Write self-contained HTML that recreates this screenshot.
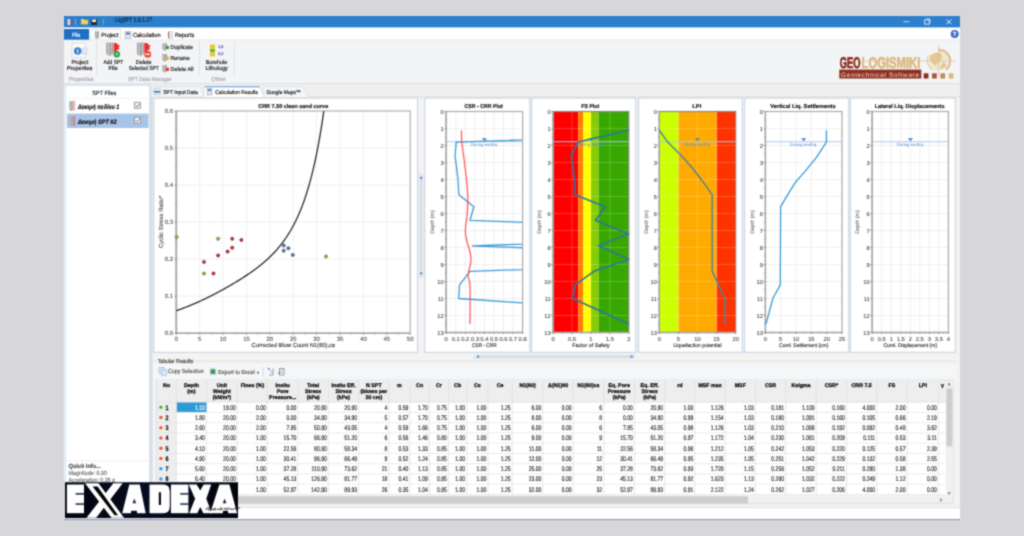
<!DOCTYPE html>
<html><head><meta charset="utf-8"><title>LiqSPT</title>
<style>html,body{margin:0;padding:0;width:1024px;height:536px;overflow:hidden;background:#d7d7d9}
svg{display:block} text{font-family:"Liberation Sans",sans-serif;text-rendering:geometricPrecision}</style></head>
<body><svg width="1024" height="536" viewBox="0 0 1024 536">
<defs><filter id="soft" x="0" y="0" width="1024" height="536" filterUnits="userSpaceOnUse" color-interpolation-filters="sRGB"><feConvolveMatrix order="3" kernelMatrix="1 2 1 2 8 2 1 2 1" divisor="20" edgeMode="duplicate"/></filter></defs>
<g filter="url(#soft)">
<rect x="0" y="0" width="1024" height="536" fill="#d7d7d9" />
<rect x="64" y="16" width="896" height="504" fill="#eceef1" />
<rect x="64" y="16" width="896" height="11.6" fill="#2b7fcc" />
<text x="115.3" y="22.4" font-size="6.4" fill="#13243a" stroke="#13243a" stroke-width="0.2" text-anchor="start" font-weight="normal" textLength="36.8" lengthAdjust="spacingAndGlyphs">LiqSPT 1.0.1.27</text>
<rect x="67.5" y="19" width="3" height="6" fill="#d8d8d8" />
<rect x="70.6" y="18.6" width="1.2" height="7" fill="#d0304a" />
<line x1="75.5" y1="19" x2="75.5" y2="25" stroke="#8fb4de" stroke-width="0.8" />
<rect x="81" y="19.8" width="7" height="4.6" fill="#f5cf5a" />
<rect x="81" y="19" width="3" height="1.5" fill="#f5cf5a" />
<rect x="91" y="19" width="6" height="6" fill="#2c2c2c" />
<rect x="92" y="19.5" width="4" height="2.5" fill="#f0f0f0" />
<line x1="103.3" y1="19" x2="103.3" y2="25" stroke="#8fb4de" stroke-width="0.8" />
<line x1="903.5" y1="21.7" x2="909.5" y2="21.7" stroke="#cfe1f5" stroke-width="0.9" />
<rect x="924.8" y="19.8" width="4.4" height="4.4" fill="none" stroke="#e3eefa" stroke-width="0.9" />
<line x1="926" y1="19" x2="930" y2="19" stroke="#e3eefa" stroke-width="0.8" />
<line x1="930" y1="19" x2="930" y2="23" stroke="#e3eefa" stroke-width="0.8" />
<line x1="946.5" y1="19.3" x2="951.5" y2="24.3" stroke="#e8f0fa" stroke-width="1" />
<line x1="951.5" y1="19.3" x2="946.5" y2="24.3" stroke="#e8f0fa" stroke-width="1" />
<rect x="64" y="27.6" width="896" height="12.4" fill="#ffffff" />
<rect x="64" y="29" width="25" height="11" fill="#1c6fc5" />
<text x="76.2" y="36.6" font-size="6" fill="#e8f2ff" stroke="#e8f2ff" stroke-width="0.2" text-anchor="middle" font-weight="normal"  textLength="8.4" lengthAdjust="spacingAndGlyphs">File</text>
<path d="M89.8,40 L89.8,29.3 L120.6,29.3 L120.6,40" fill="#fbfbfc" stroke="#d6d8dc" stroke-width="0.8"/>
<text x="101.2" y="37" font-size="6" fill="#2a2222" stroke="#2a2222" stroke-width="0.2" text-anchor="start" font-weight="normal"  textLength="17.2" lengthAdjust="spacingAndGlyphs">Project</text>
<rect x="125" y="31.5" width="6" height="7" fill="#e2e4e8" stroke="#a8acb4" stroke-width="0.6" />
<rect x="126" y="32.5" width="4" height="2" fill="#4a78c0" />
<text x="133" y="37" font-size="6" fill="#2a2222" stroke="#2a2222" stroke-width="0.2" text-anchor="start" font-weight="normal"  textLength="27.5" lengthAdjust="spacingAndGlyphs">Calculation</text>
<rect x="168" y="31.5" width="1.3" height="7" fill="#c07040" />
<rect x="169.3" y="31.8" width="3.5" height="6.5" fill="#e8eef8" stroke="#b0b8c8" stroke-width="0.5" />
<text x="175" y="37" font-size="6" fill="#2a2222" stroke="#2a2222" stroke-width="0.2" text-anchor="start" font-weight="normal"  textLength="19.2" lengthAdjust="spacingAndGlyphs">Reports</text>
<circle cx="954.7" cy="33.9" r="4" fill="#3f6fc4"/>
<text x="954.7" y="36.2" font-size="6" fill="#ffffff" stroke="#ffffff" stroke-width="0.2" text-anchor="middle" font-weight="bold" >?</text>
<line x1="64" y1="40" x2="960" y2="40" stroke="#dcdfe3" stroke-width="0.8" />
<rect x="64" y="40.3" width="896" height="43.5" fill="#f3f4f6" />
<line x1="64" y1="83.8" x2="960" y2="83.8" stroke="#d8dadd" stroke-width="1" />
<rect x="72" y="43" width="13.5" height="14.3" fill="#fbfbfb" stroke="#d0d2d6" stroke-width="0.7" />
<rect x="82" y="48" width="5" height="6" fill="#e4e8f0" stroke="#b8c4d8" stroke-width="0.5" />
<circle cx="77.7" cy="51" r="3.8" fill="#3c82d2"/>
<text x="77.7" y="53.2" font-size="5" fill="#ffffff" stroke="#ffffff" stroke-width="0.2" text-anchor="middle" font-weight="bold" >i</text>
<text x="79.9" y="64.2" font-size="5.8" fill="#262626" stroke="#262626" stroke-width="0.2" text-anchor="middle" font-weight="normal"  textLength="16.7" lengthAdjust="spacingAndGlyphs">Project</text>
<text x="79.5" y="70.2" font-size="5.8" fill="#262626" stroke="#262626" stroke-width="0.2" text-anchor="middle" font-weight="normal"  textLength="25.5" lengthAdjust="spacingAndGlyphs">Properties</text>
<text x="81.2" y="81.3" font-size="5.8" fill="#a9abb0" stroke="#a9abb0" stroke-width="0.2" text-anchor="middle" font-weight="normal"  textLength="24.5" lengthAdjust="spacingAndGlyphs">Properties</text>
<line x1="96.5" y1="42" x2="96.5" y2="76" stroke="#dcdde0" stroke-width="0.8" />
<defs><linearGradient id="cg" x1="0" x2="1" y1="0" y2="0"><stop offset="0" stop-color="#8a8a8a"/><stop offset="0.3" stop-color="#d0d0d0"/><stop offset="0.55" stop-color="#9a9a9a"/><stop offset="0.8" stop-color="#c4c4c4"/><stop offset="1" stop-color="#7a7a7a"/></linearGradient></defs>
<path d="M95,31.3 L98.8,31.3 L98.8,37.0 A1.9,1.9 0 0 1 95,37.0 Z" fill="url(#cg)"/>
<path d="M106.3,42.5 L112.89999999999999,42.5 L112.89999999999999,52.5 A3.3,3.3 0 0 1 106.3,52.5 Z" fill="url(#cg)"/>
<polygon points="113.6,43 116.5,43 117.5,44.5 119.8,45.5 118.5,47.5 119.5,49 117,50 116,52 113.6,52.5" fill="#ee2a2a"/>
<circle cx="116.8" cy="54.2" r="3.3" fill="#2ea84a"/>
<circle cx="116.8" cy="54.2" r="0.9" fill="#d8f0d8"/>
<text x="113.4" y="64.2" font-size="5.8" fill="#262626" stroke="#262626" stroke-width="0.2" text-anchor="middle" font-weight="normal"  textLength="19.7" lengthAdjust="spacingAndGlyphs">Add SPT</text>
<text x="113.1" y="70.2" font-size="5.8" fill="#262626" stroke="#262626" stroke-width="0.2" text-anchor="middle" font-weight="normal"  textLength="9.2" lengthAdjust="spacingAndGlyphs">File</text>
<path d="M137,42.5 L143.6,42.5 L143.6,52.5 A3.3,3.3 0 0 1 137,52.5 Z" fill="url(#cg)"/>
<polygon points="144.3,43 147.2,43 148.2,44.5 150.5,45.5 149.2,47.5 150.2,49 147.7,50 146.7,52 144.3,52.5" fill="#ee2a2a"/>
<circle cx="147.7" cy="54.2" r="3.5" fill="#e84a3a"/>
<rect x="145.6" y="53.6" width="4.2" height="1.3" fill="#ffffff" />
<text x="143.7" y="64.2" font-size="5.8" fill="#262626" stroke="#262626" stroke-width="0.2" text-anchor="middle" font-weight="normal"  textLength="15.8" lengthAdjust="spacingAndGlyphs">Delete</text>
<text x="143.8" y="70.2" font-size="5.8" fill="#262626" stroke="#262626" stroke-width="0.2" text-anchor="middle" font-weight="normal"  textLength="30" lengthAdjust="spacingAndGlyphs">Selected SPT</text>
<path d="M162.5,43.2 L167.0,43.2 L167.0,48.45 A2.25,2.25 0 0 1 162.5,48.45 Z" fill="url(#cg)"/>
<rect x="166" y="46" width="3" height="3" fill="#3a9a3a" />
<text x="170.6" y="49" font-size="5.8" fill="#262626" stroke="#262626" stroke-width="0.2" text-anchor="start" font-weight="normal"  textLength="22.4" lengthAdjust="spacingAndGlyphs">Duplicate</text>
<path d="M162.5,53.900000000000006 L167.0,53.900000000000006 L167.0,59.150000000000006 A2.25,2.25 0 0 1 162.5,59.150000000000006 Z" fill="url(#cg)"/>
<rect x="166" y="56.7" width="3" height="3" fill="#e0b030" />
<text x="170.6" y="59.7" font-size="5.8" fill="#262626" stroke="#262626" stroke-width="0.2" text-anchor="start" font-weight="normal"  textLength="19.3" lengthAdjust="spacingAndGlyphs">Rename</text>
<path d="M162.5,65.10000000000001 L167.0,65.10000000000001 L167.0,70.35000000000001 A2.25,2.25 0 0 1 162.5,70.35000000000001 Z" fill="url(#cg)"/>
<rect x="166" y="67.9" width="3" height="3" fill="#e03030" />
<text x="170.6" y="70.9" font-size="5.8" fill="#262626" stroke="#262626" stroke-width="0.2" text-anchor="start" font-weight="normal"  textLength="22.8" lengthAdjust="spacingAndGlyphs">Delete All</text>
<text x="149.8" y="81.3" font-size="5.8" fill="#a9abb0" stroke="#a9abb0" stroke-width="0.2" text-anchor="middle" font-weight="normal"  textLength="44" lengthAdjust="spacingAndGlyphs">SPT Data Manager</text>
<line x1="199.5" y1="42" x2="199.5" y2="76" stroke="#dcdde0" stroke-width="0.8" />
<rect x="210" y="44.5" width="5" height="12" fill="#e8c830" />
<rect x="210" y="49.5" width="5" height="2" fill="#40b040" />
<text x="218" y="48" font-size="4" fill="#5050c0" stroke="#5050c0" stroke-width="0.2" text-anchor="start" font-weight="normal" >1,5</text>
<text x="218" y="54.5" font-size="4" fill="#5050c0" stroke="#5050c0" stroke-width="0.2" text-anchor="start" font-weight="normal" >0,2</text>
<text x="216.5" y="64.2" font-size="5.8" fill="#262626" stroke="#262626" stroke-width="0.2" text-anchor="middle" font-weight="normal"  textLength="21.5" lengthAdjust="spacingAndGlyphs">Borehole</text>
<text x="216.7" y="70.2" font-size="5.8" fill="#262626" stroke="#262626" stroke-width="0.2" text-anchor="middle" font-weight="normal"  textLength="22.5" lengthAdjust="spacingAndGlyphs">Lithology</text>
<text x="218.6" y="81.3" font-size="5.8" fill="#a9abb0" stroke="#a9abb0" stroke-width="0.2" text-anchor="middle" font-weight="normal"  textLength="14.5" lengthAdjust="spacingAndGlyphs">Other</text>
<line x1="234.4" y1="42" x2="234.4" y2="76" stroke="#dcdde0" stroke-width="0.8" />
<text x="839.8" y="67.6" font-size="15.5" font-weight="bold" fill="#8a2c1c" stroke="#8a2c1c" stroke-width="0.7" textLength="20.8" lengthAdjust="spacingAndGlyphs">GEO</text>
<text x="861.5" y="67.6" font-size="15.5" font-weight="bold" fill="#d9b97a" stroke="#d9b97a" stroke-width="0.6" textLength="58.8" lengthAdjust="spacingAndGlyphs">LOGISMIKI</text>
<rect x="839.3" y="69.6" width="82" height="8.9" fill="#8e2e1e" />
<text x="841" y="76.6" font-size="6.4" fill="#f0e0d0" textLength="78" lengthAdjust="spacing">Geotechnical Software</text>
<rect x="923.7" y="73.3" width="4.7" height="5.2" fill="#8a2c1c" />
<rect x="932.0500000000001" y="73.3" width="4.7" height="5.2" fill="#a8583a" />
<rect x="940.4000000000001" y="73.3" width="4.7" height="5.2" fill="#c08858" />
<rect x="948.75" y="73.3" width="4.7" height="5.2" fill="#d8b878" />
<circle cx="938.5" cy="61" r="9.5" fill="#f2e6cc"/>
<path d="M930,56 Q934,52 940,53 Q944,56 941,60 Q937,62 936,66 Q932,64 930,60 Z M942,63 Q946,62 946,66 Q943,70 940,69 Z" fill="#e2c48c" opacity="0.9"/>
<path d="M938.5,50 A11,11 0 0 1 946,69.5" fill="none" stroke="#d8b070" stroke-width="2.4" opacity="0.8"/>
<path d="M929,55 A11,11 0 0 0 933,70" fill="none" stroke="#e0c490" stroke-width="1.2" opacity="0.8"/>
<line x1="938.5" y1="45" x2="938.5" y2="77" stroke="#d8b8a0" stroke-width="0.7" />
<line x1="862" y1="61" x2="956" y2="61" stroke="#e0b8b0" stroke-width="0.7" />
<rect x="64" y="85.6" width="86" height="434" fill="#eef3f8" />
<rect x="65.6" y="85.6" width="84" height="434" fill="#ffffff" stroke="#cfe3fa" stroke-width="1" />
<text x="104.3" y="94.6" font-size="6" fill="#333" stroke="#333" stroke-width="0.2" text-anchor="middle" font-weight="normal"  textLength="24" lengthAdjust="spacingAndGlyphs">SPT Files</text>
<line x1="67" y1="98.3" x2="148" y2="98.3" stroke="#eeeeee" stroke-width="0.8" />
<rect x="67" y="113.6" width="81.5" height="14.4" fill="#a8c4e8" />
<path d="M69.3,101.0 L73.1,101.0 L73.1,109.1 A1.9,1.9 0 0 1 69.3,109.1 Z" fill="url(#cg)"/>
<line x1="74.0" y1="101.0" x2="74.0" y2="111.0" stroke="#e83040" stroke-width="0.8" stroke-dasharray="1.4,0.6"/>
<line x1="74.0" y1="102.0" x2="75.1" y2="102.0" stroke="#e83040" stroke-width="0.6" />
<line x1="74.0" y1="104.6" x2="75.1" y2="104.6" stroke="#e83040" stroke-width="0.6" />
<line x1="74.0" y1="107.2" x2="75.1" y2="107.2" stroke="#e83040" stroke-width="0.6" />
<line x1="74.0" y1="109.8" x2="75.1" y2="109.8" stroke="#e83040" stroke-width="0.6" />
<path d="M69.3,116.1 L73.1,116.1 L73.1,124.19999999999999 A1.9,1.9 0 0 1 69.3,124.19999999999999 Z" fill="url(#cg)"/>
<line x1="74.0" y1="116.1" x2="74.0" y2="126.1" stroke="#e83040" stroke-width="0.8" stroke-dasharray="1.4,0.6"/>
<line x1="74.0" y1="117.1" x2="75.1" y2="117.1" stroke="#e83040" stroke-width="0.6" />
<line x1="74.0" y1="119.69999999999999" x2="75.1" y2="119.69999999999999" stroke="#e83040" stroke-width="0.6" />
<line x1="74.0" y1="122.3" x2="75.1" y2="122.3" stroke="#e83040" stroke-width="0.6" />
<line x1="74.0" y1="124.89999999999999" x2="75.1" y2="124.89999999999999" stroke="#e83040" stroke-width="0.6" />
<text x="77.9" y="108.8" font-size="6.4" fill="#111" stroke="#111" stroke-width="0.2" text-anchor="start" font-weight="bold" font-style="italic" textLength="41.4" lengthAdjust="spacingAndGlyphs">Δοκιμή πεδίου 1</text>
<text x="77.9" y="123.7" font-size="6.4" fill="#111" stroke="#111" stroke-width="0.2" text-anchor="start" font-weight="bold" font-style="italic" textLength="38.6" lengthAdjust="spacingAndGlyphs">Δοκιμή SPT #2</text>
<rect x="134.4" y="102.3" width="6" height="6" fill="#f4f4f4" stroke="#8a8a8a" stroke-width="0.8" />
<polyline points="135.60,105.50 137.10,106.90 140.00,103.60" fill="none" stroke="#555" stroke-width="0.8" stroke-linejoin="round" />
<rect x="134.4" y="117.3" width="6" height="6" fill="#f4f4f4" stroke="#8a8a8a" stroke-width="0.8" />
<polyline points="135.60,120.50 137.10,121.90 140.00,118.60" fill="none" stroke="#555" stroke-width="0.8" stroke-linejoin="round" />
<line x1="66" y1="460.7" x2="149" y2="460.7" stroke="#eaeaea" stroke-width="0.8" />
<text x="68.6" y="467.8" font-size="6" fill="#555" stroke="#555" stroke-width="0.2" text-anchor="start" font-weight="bold"  textLength="32.3" lengthAdjust="spacingAndGlyphs">Quick Info...</text>
<text x="68.6" y="475.2" font-size="6" fill="#7a7a7a" stroke="#7a7a7a" stroke-width="0.2" text-anchor="start" font-weight="normal"  textLength="38.4" lengthAdjust="spacingAndGlyphs">Magnitude: 6.90</text>
<text x="68.6" y="482.4" font-size="6" fill="#7a7a7a" stroke="#7a7a7a" stroke-width="0.2" text-anchor="start" font-weight="normal"  textLength="46.3" lengthAdjust="spacingAndGlyphs">Acceleration: 0.28 g</text>
<rect x="150.5" y="85.6" width="809" height="434" fill="#f4f3f1" />
<line x1="150.2" y1="85.6" x2="150.2" y2="520" stroke="#d0e2f4" stroke-width="1" />
<rect x="150.8" y="84.3" width="1.6" height="424" fill="#d8d8d8" />
<rect x="151" y="84.3" width="809" height="12.6" fill="#efefef" />
<line x1="151" y1="96.9" x2="960" y2="96.9" stroke="#d9dbdd" stroke-width="1" />
<path d="M152,96.5 L152,87 L200,87 L204,96.5" fill="#f5f6f8" stroke="#d4d8de" stroke-width="0.6"/>
<rect x="154.2" y="88.8" width="6.5" height="6" fill="#e8eef8" stroke="#9ab4d8" stroke-width="0.5" />
<rect x="155" y="91" width="5" height="1.6" fill="#3a6ac0" />
<rect x="153.5" y="91" width="1.2" height="1.2" fill="#e03030" />
<text x="163.2" y="93.7" font-size="5.6" fill="#2a2a2a" stroke="#2a2a2a" stroke-width="0.2" text-anchor="start" font-weight="normal"  textLength="34.6" lengthAdjust="spacingAndGlyphs">SPT Input Data</text>
<path d="M204,97 L204,86.6 L260,86.6 L264,97" fill="#ffffff" stroke="#c8d0dc" stroke-width="0.6"/>
<line x1="204.5" y1="86.8" x2="259.5" y2="86.8" stroke="#5aa0e0" stroke-width="1" />
<rect x="207" y="88.5" width="5" height="6.5" fill="#dde0e6" stroke="#a0a4ac" stroke-width="0.5" />
<rect x="207.8" y="89.3" width="3.4" height="1.6" fill="#4a78c0" />
<text x="215.2" y="93.7" font-size="5.6" fill="#2a2a2a" stroke="#2a2a2a" stroke-width="0.2" text-anchor="start" font-weight="normal"  textLength="42.8" lengthAdjust="spacingAndGlyphs">Calculation Results</text>
<path d="M264,97 L264,87 L303,87 L308,97" fill="#f5f6f8" stroke="#d4d8de" stroke-width="0.6"/>
<text x="266.5" y="93.7" font-size="5.6" fill="#2a2a2a" stroke="#2a2a2a" stroke-width="0.2" text-anchor="start" font-weight="normal"  textLength="34.3" lengthAdjust="spacingAndGlyphs">Google Maps™</text>
<rect x="153.8" y="98.1" width="263.8" height="254.29999999999998" fill="#ffffff" stroke="#cfd9e4" stroke-width="1.3" />
<text x="293.2" y="108.3" font-size="5.6" fill="#1a1a1a" stroke="#1a1a1a" stroke-width="0.2" text-anchor="middle" font-weight="bold"  textLength="70" lengthAdjust="spacingAndGlyphs">CRR 7.50 clean sand curve</text>
<line x1="199.69" y1="111.0" x2="199.69" y2="333.2" stroke="#eaeaea" stroke-width="0.7" />
<line x1="223.08" y1="111.0" x2="223.08" y2="333.2" stroke="#eaeaea" stroke-width="0.7" />
<line x1="246.47" y1="111.0" x2="246.47" y2="333.2" stroke="#eaeaea" stroke-width="0.7" />
<line x1="269.86" y1="111.0" x2="269.86" y2="333.2" stroke="#eaeaea" stroke-width="0.7" />
<line x1="293.25" y1="111.0" x2="293.25" y2="333.2" stroke="#eaeaea" stroke-width="0.7" />
<line x1="316.64" y1="111.0" x2="316.64" y2="333.2" stroke="#eaeaea" stroke-width="0.7" />
<line x1="340.03" y1="111.0" x2="340.03" y2="333.2" stroke="#eaeaea" stroke-width="0.7" />
<line x1="363.42" y1="111.0" x2="363.42" y2="333.2" stroke="#eaeaea" stroke-width="0.7" />
<line x1="386.80999999999995" y1="111.0" x2="386.80999999999995" y2="333.2" stroke="#eaeaea" stroke-width="0.7" />
<line x1="176.3" y1="296.16666666666663" x2="410.2" y2="296.16666666666663" stroke="#eaeaea" stroke-width="0.7" />
<line x1="176.3" y1="259.1333333333333" x2="410.2" y2="259.1333333333333" stroke="#eaeaea" stroke-width="0.7" />
<line x1="176.3" y1="222.1" x2="410.2" y2="222.1" stroke="#eaeaea" stroke-width="0.7" />
<line x1="176.3" y1="185.06666666666666" x2="410.2" y2="185.06666666666666" stroke="#eaeaea" stroke-width="0.7" />
<line x1="176.3" y1="148.03333333333333" x2="410.2" y2="148.03333333333333" stroke="#eaeaea" stroke-width="0.7" />
<rect x="176.3" y="111.0" width="233.89999999999998" height="222.2" fill="none" stroke="#b0b0b0" stroke-width="1.2" />
<line x1="176.3" y1="111.0" x2="176.3" y2="333.8" stroke="#a8a8a8" stroke-width="1.8" />
<line x1="175.70000000000002" y1="333.2" x2="410.2" y2="333.2" stroke="#a8a8a8" stroke-width="1.5" />
<line x1="176.3" y1="333.2" x2="176.3" y2="334.8" stroke="#777" stroke-width="0.8" />
<text x="176.3" y="341" font-size="6" fill="#4a4a4a" stroke="#4a4a4a" stroke-width="0.08" text-anchor="middle" font-weight="normal" >0</text>
<line x1="187.995" y1="333.2" x2="187.995" y2="334.4" stroke="#888" stroke-width="0.7" />
<line x1="199.69" y1="333.2" x2="199.69" y2="334.8" stroke="#777" stroke-width="0.8" />
<text x="199.69" y="341" font-size="6" fill="#4a4a4a" stroke="#4a4a4a" stroke-width="0.08" text-anchor="middle" font-weight="normal" >5</text>
<line x1="211.385" y1="333.2" x2="211.385" y2="334.4" stroke="#888" stroke-width="0.7" />
<line x1="223.08" y1="333.2" x2="223.08" y2="334.8" stroke="#777" stroke-width="0.8" />
<text x="223.08" y="341" font-size="6" fill="#4a4a4a" stroke="#4a4a4a" stroke-width="0.08" text-anchor="middle" font-weight="normal" >10</text>
<line x1="234.775" y1="333.2" x2="234.775" y2="334.4" stroke="#888" stroke-width="0.7" />
<line x1="246.47" y1="333.2" x2="246.47" y2="334.8" stroke="#777" stroke-width="0.8" />
<text x="246.47" y="341" font-size="6" fill="#4a4a4a" stroke="#4a4a4a" stroke-width="0.08" text-anchor="middle" font-weight="normal" >15</text>
<line x1="258.165" y1="333.2" x2="258.165" y2="334.4" stroke="#888" stroke-width="0.7" />
<line x1="269.86" y1="333.2" x2="269.86" y2="334.8" stroke="#777" stroke-width="0.8" />
<text x="269.86" y="341" font-size="6" fill="#4a4a4a" stroke="#4a4a4a" stroke-width="0.08" text-anchor="middle" font-weight="normal" >20</text>
<line x1="281.555" y1="333.2" x2="281.555" y2="334.4" stroke="#888" stroke-width="0.7" />
<line x1="293.25" y1="333.2" x2="293.25" y2="334.8" stroke="#777" stroke-width="0.8" />
<text x="293.25" y="341" font-size="6" fill="#4a4a4a" stroke="#4a4a4a" stroke-width="0.08" text-anchor="middle" font-weight="normal" >25</text>
<line x1="304.945" y1="333.2" x2="304.945" y2="334.4" stroke="#888" stroke-width="0.7" />
<line x1="316.64" y1="333.2" x2="316.64" y2="334.8" stroke="#777" stroke-width="0.8" />
<text x="316.64" y="341" font-size="6" fill="#4a4a4a" stroke="#4a4a4a" stroke-width="0.08" text-anchor="middle" font-weight="normal" >30</text>
<line x1="328.335" y1="333.2" x2="328.335" y2="334.4" stroke="#888" stroke-width="0.7" />
<line x1="340.03" y1="333.2" x2="340.03" y2="334.8" stroke="#777" stroke-width="0.8" />
<text x="340.03" y="341" font-size="6" fill="#4a4a4a" stroke="#4a4a4a" stroke-width="0.08" text-anchor="middle" font-weight="normal" >35</text>
<line x1="351.725" y1="333.2" x2="351.725" y2="334.4" stroke="#888" stroke-width="0.7" />
<line x1="363.42" y1="333.2" x2="363.42" y2="334.8" stroke="#777" stroke-width="0.8" />
<text x="363.42" y="341" font-size="6" fill="#4a4a4a" stroke="#4a4a4a" stroke-width="0.08" text-anchor="middle" font-weight="normal" >40</text>
<line x1="375.115" y1="333.2" x2="375.115" y2="334.4" stroke="#888" stroke-width="0.7" />
<line x1="386.80999999999995" y1="333.2" x2="386.80999999999995" y2="334.8" stroke="#777" stroke-width="0.8" />
<text x="386.80999999999995" y="341" font-size="6" fill="#4a4a4a" stroke="#4a4a4a" stroke-width="0.08" text-anchor="middle" font-weight="normal" >45</text>
<line x1="398.505" y1="333.2" x2="398.505" y2="334.4" stroke="#888" stroke-width="0.7" />
<line x1="410.2" y1="333.2" x2="410.2" y2="334.8" stroke="#777" stroke-width="0.8" />
<text x="410.2" y="341" font-size="6" fill="#4a4a4a" stroke="#4a4a4a" stroke-width="0.08" text-anchor="middle" font-weight="normal" >50</text>
<line x1="174.60000000000002" y1="333.2" x2="176.3" y2="333.2" stroke="#777" stroke-width="0.8" />
<text x="173" y="335.3" font-size="6" fill="#4a4a4a" stroke="#4a4a4a" stroke-width="0.08" text-anchor="end" font-weight="normal" >0.0</text>
<line x1="175.10000000000002" y1="314.68333333333334" x2="176.3" y2="314.68333333333334" stroke="#888" stroke-width="0.7" />
<line x1="174.60000000000002" y1="296.16666666666663" x2="176.3" y2="296.16666666666663" stroke="#777" stroke-width="0.8" />
<text x="173" y="298.26666666666665" font-size="6" fill="#4a4a4a" stroke="#4a4a4a" stroke-width="0.08" text-anchor="end" font-weight="normal" >0.1</text>
<line x1="175.10000000000002" y1="277.65" x2="176.3" y2="277.65" stroke="#888" stroke-width="0.7" />
<line x1="174.60000000000002" y1="259.1333333333333" x2="176.3" y2="259.1333333333333" stroke="#777" stroke-width="0.8" />
<text x="173" y="261.23333333333335" font-size="6" fill="#4a4a4a" stroke="#4a4a4a" stroke-width="0.08" text-anchor="end" font-weight="normal" >0.2</text>
<line x1="175.10000000000002" y1="240.61666666666667" x2="176.3" y2="240.61666666666667" stroke="#888" stroke-width="0.7" />
<line x1="174.60000000000002" y1="222.1" x2="176.3" y2="222.1" stroke="#777" stroke-width="0.8" />
<text x="173" y="224.2" font-size="6" fill="#4a4a4a" stroke="#4a4a4a" stroke-width="0.08" text-anchor="end" font-weight="normal" >0.3</text>
<line x1="175.10000000000002" y1="203.58333333333331" x2="176.3" y2="203.58333333333331" stroke="#888" stroke-width="0.7" />
<line x1="174.60000000000002" y1="185.06666666666666" x2="176.3" y2="185.06666666666666" stroke="#777" stroke-width="0.8" />
<text x="173" y="187.16666666666666" font-size="6" fill="#4a4a4a" stroke="#4a4a4a" stroke-width="0.08" text-anchor="end" font-weight="normal" >0.4</text>
<line x1="175.10000000000002" y1="166.54999999999998" x2="176.3" y2="166.54999999999998" stroke="#888" stroke-width="0.7" />
<line x1="174.60000000000002" y1="148.03333333333333" x2="176.3" y2="148.03333333333333" stroke="#777" stroke-width="0.8" />
<text x="173" y="150.13333333333333" font-size="6" fill="#4a4a4a" stroke="#4a4a4a" stroke-width="0.08" text-anchor="end" font-weight="normal" >0.5</text>
<line x1="175.10000000000002" y1="129.51666666666662" x2="176.3" y2="129.51666666666662" stroke="#888" stroke-width="0.7" />
<line x1="174.60000000000002" y1="111.0" x2="176.3" y2="111.0" stroke="#777" stroke-width="0.8" />
<text x="173" y="113.1" font-size="6" fill="#4a4a4a" stroke="#4a4a4a" stroke-width="0.08" text-anchor="end" font-weight="normal" >0.6</text>
<text x="293.2" y="347.4" font-size="5.8" fill="#4a4a4a" stroke="#4a4a4a" stroke-width="0.2" text-anchor="middle" font-weight="normal" >Corrected Blow Count N1(60),cs</text>
<text x="0" y="0" font-size="6" fill="#4a4a4a" stroke="#4a4a4a" stroke-width="0.1" text-anchor="middle" textLength="52.5" lengthAdjust="spacingAndGlyphs" transform="translate(162.7,221.8) rotate(-90)">Cyclic Stress Ratio*</text>
<polyline points="176.30,310.68 177.47,310.28 178.64,309.87 179.81,309.45 180.98,309.03 182.15,308.59 183.32,308.15 184.49,307.71 185.66,307.26 186.83,306.80 188.00,306.33 189.16,305.86 190.33,305.38 191.50,304.89 192.67,304.40 193.84,303.90 195.01,303.39 196.18,302.88 197.35,302.36 198.52,301.83 199.69,301.30 200.86,300.76 202.03,300.22 203.20,299.67 204.37,299.11 205.54,298.55 206.71,297.99 207.88,297.41 209.05,296.83 210.22,296.25 211.38,295.66 212.55,295.07 213.72,294.47 214.89,293.86 216.06,293.25 217.23,292.63 218.40,292.01 219.57,291.39 220.74,290.76 221.91,290.12 223.08,289.48 224.25,288.83 225.42,288.18 226.59,287.52 227.76,286.86 228.93,286.19 230.10,285.51 231.27,284.83 232.44,284.15 233.61,283.46 234.78,282.76 235.94,282.05 237.11,281.34 238.28,280.62 239.45,279.90 240.62,279.17 241.79,278.43 242.96,277.68 244.13,276.92 245.30,276.16 246.47,275.38 247.64,274.60 248.81,273.81 249.98,273.00 251.15,272.19 252.32,271.36 253.49,270.52 254.66,269.66 255.83,268.80 257.00,267.91 258.17,267.02 259.33,266.10 260.50,265.17 261.67,264.22 262.84,263.25 264.01,262.26 265.18,261.25 266.35,260.22 267.52,259.16 268.69,258.08 269.86,256.97 271.03,255.83 272.20,254.66 273.37,253.45 274.54,252.22 275.71,250.95 276.88,249.64 278.05,248.29 279.22,246.89 280.39,245.46 281.56,243.97 282.72,242.44 283.89,240.85 285.06,239.20 286.23,237.50 287.40,235.73 288.57,233.90 289.74,231.99 290.91,230.01 292.08,227.95 293.25,225.80 294.42,223.56 295.59,221.23 296.76,218.80 297.93,216.26 299.10,213.60 300.27,210.83 301.44,207.92 302.61,204.88 303.78,201.69 304.94,198.34 306.11,194.83 307.28,191.14 308.45,187.26 309.62,183.18 310.79,178.89 311.96,174.36 313.13,169.59 314.30,164.55 315.47,159.24 316.64,153.61 317.81,147.67 318.98,141.37 320.15,134.70 321.32,127.62 322.49,120.11 323.66,112.14 323.82,111.00" fill="none" stroke="#2a2a2a" stroke-width="1.3" stroke-linejoin="round" />
<circle cx="176.6" cy="237" r="1.75" fill="#7ab840" stroke="#555" stroke-width="0.35"/>
<circle cx="218.1" cy="238.8" r="1.75" fill="#7ab840" stroke="#555" stroke-width="0.35"/>
<circle cx="232.2" cy="238.8" r="1.75" fill="#c82020" stroke="#555" stroke-width="0.35"/>
<circle cx="241.4" cy="239.9" r="1.75" fill="#c82020" stroke="#555" stroke-width="0.35"/>
<circle cx="232.2" cy="247.7" r="1.75" fill="#c82020" stroke="#555" stroke-width="0.35"/>
<circle cx="227.6" cy="251.6" r="1.75" fill="#c82020" stroke="#555" stroke-width="0.35"/>
<circle cx="218.1" cy="255.4" r="1.75" fill="#c82020" stroke="#555" stroke-width="0.35"/>
<circle cx="204" cy="261.9" r="1.75" fill="#c82020" stroke="#555" stroke-width="0.35"/>
<circle cx="204" cy="273.5" r="1.75" fill="#7ab840" stroke="#555" stroke-width="0.35"/>
<circle cx="213.5" cy="273.5" r="1.75" fill="#c82020" stroke="#555" stroke-width="0.35"/>
<circle cx="283.7" cy="245.4" r="1.75" fill="#4a70b0" stroke="#555" stroke-width="0.35"/>
<circle cx="288.4" cy="248.2" r="1.75" fill="#4a70b0" stroke="#555" stroke-width="0.35"/>
<circle cx="283.7" cy="250.7" r="1.75" fill="#4a70b0" stroke="#555" stroke-width="0.35"/>
<circle cx="292.8" cy="254.9" r="1.75" fill="#4a70b0" stroke="#555" stroke-width="0.35"/>
<circle cx="326" cy="256.5" r="1.75" fill="#7ab840" stroke="#555" stroke-width="0.35"/>
<rect x="419.6" y="174" width="3.2" height="103" fill="#ecebea" stroke="#d8d8d8" stroke-width="0.5" />
<line x1="421.2" y1="176" x2="421.2" y2="275" stroke="#b8d0ec" stroke-width="0.8" />
<rect x="420.2" y="176.8" width="2" height="2.2" fill="#4a90e0" />
<rect x="420.2" y="272.3" width="2" height="2.2" fill="#4a90e0" />
<rect x="424.7" y="98.1" width="105.09999999999997" height="254.29999999999998" fill="#ffffff" stroke="#cfd9e4" stroke-width="1.3" />
<text x="483.7" y="108.3" font-size="5.6" fill="#1a1a1a" stroke="#1a1a1a" stroke-width="0.2" text-anchor="middle" font-weight="bold"  textLength="38.3" lengthAdjust="spacingAndGlyphs">CSR - CRR Plot</text>
<line x1="455.75" y1="111.5" x2="455.75" y2="332.5" stroke="#eaeaea" stroke-width="0.7" />
<line x1="465.3" y1="111.5" x2="465.3" y2="332.5" stroke="#eaeaea" stroke-width="0.7" />
<line x1="474.85" y1="111.5" x2="474.85" y2="332.5" stroke="#eaeaea" stroke-width="0.7" />
<line x1="484.4" y1="111.5" x2="484.4" y2="332.5" stroke="#eaeaea" stroke-width="0.7" />
<line x1="493.95" y1="111.5" x2="493.95" y2="332.5" stroke="#eaeaea" stroke-width="0.7" />
<line x1="503.5" y1="111.5" x2="503.5" y2="332.5" stroke="#eaeaea" stroke-width="0.7" />
<line x1="513.0500000000001" y1="111.5" x2="513.0500000000001" y2="332.5" stroke="#eaeaea" stroke-width="0.7" />
<line x1="446.2" y1="128.5" x2="522.6" y2="128.5" stroke="#eaeaea" stroke-width="0.7" />
<line x1="446.2" y1="145.5" x2="522.6" y2="145.5" stroke="#eaeaea" stroke-width="0.7" />
<line x1="446.2" y1="162.5" x2="522.6" y2="162.5" stroke="#eaeaea" stroke-width="0.7" />
<line x1="446.2" y1="179.5" x2="522.6" y2="179.5" stroke="#eaeaea" stroke-width="0.7" />
<line x1="446.2" y1="196.5" x2="522.6" y2="196.5" stroke="#eaeaea" stroke-width="0.7" />
<line x1="446.2" y1="213.5" x2="522.6" y2="213.5" stroke="#eaeaea" stroke-width="0.7" />
<line x1="446.2" y1="230.5" x2="522.6" y2="230.5" stroke="#eaeaea" stroke-width="0.7" />
<line x1="446.2" y1="247.5" x2="522.6" y2="247.5" stroke="#eaeaea" stroke-width="0.7" />
<line x1="446.2" y1="264.5" x2="522.6" y2="264.5" stroke="#eaeaea" stroke-width="0.7" />
<line x1="446.2" y1="281.5" x2="522.6" y2="281.5" stroke="#eaeaea" stroke-width="0.7" />
<line x1="446.2" y1="298.5" x2="522.6" y2="298.5" stroke="#eaeaea" stroke-width="0.7" />
<line x1="446.2" y1="315.5" x2="522.6" y2="315.5" stroke="#eaeaea" stroke-width="0.7" />
<rect x="446.2" y="111.5" width="76.40000000000003" height="221.0" fill="none" stroke="#aaaaaa" stroke-width="1.2" />
<line x1="446.2" y1="111.5" x2="446.2" y2="333.1" stroke="#a8a8a8" stroke-width="1.5" />
<line x1="445.7" y1="332.5" x2="522.6" y2="332.5" stroke="#a8a8a8" stroke-width="1.4" />
<line x1="446.2" y1="332.5" x2="446.2" y2="334.0" stroke="#777" stroke-width="0.8" />
<text x="446.2" y="340.6" font-size="5.8" fill="#4a4a4a" stroke="#4a4a4a" stroke-width="0.1" text-anchor="middle" font-weight="normal" >0</text>
<line x1="450.97499999999997" y1="332.5" x2="450.97499999999997" y2="333.6" stroke="#888" stroke-width="0.7" />
<line x1="455.75" y1="332.5" x2="455.75" y2="334.0" stroke="#777" stroke-width="0.8" />
<text x="455.75" y="340.6" font-size="5.8" fill="#4a4a4a" stroke="#4a4a4a" stroke-width="0.1" text-anchor="middle" font-weight="normal" >0.1</text>
<line x1="460.525" y1="332.5" x2="460.525" y2="333.6" stroke="#888" stroke-width="0.7" />
<line x1="465.3" y1="332.5" x2="465.3" y2="334.0" stroke="#777" stroke-width="0.8" />
<text x="465.3" y="340.6" font-size="5.8" fill="#4a4a4a" stroke="#4a4a4a" stroke-width="0.1" text-anchor="middle" font-weight="normal" >0.2</text>
<line x1="470.075" y1="332.5" x2="470.075" y2="333.6" stroke="#888" stroke-width="0.7" />
<line x1="474.85" y1="332.5" x2="474.85" y2="334.0" stroke="#777" stroke-width="0.8" />
<text x="474.85" y="340.6" font-size="5.8" fill="#4a4a4a" stroke="#4a4a4a" stroke-width="0.1" text-anchor="middle" font-weight="normal" >0.3</text>
<line x1="479.625" y1="332.5" x2="479.625" y2="333.6" stroke="#888" stroke-width="0.7" />
<line x1="484.4" y1="332.5" x2="484.4" y2="334.0" stroke="#777" stroke-width="0.8" />
<text x="484.4" y="340.6" font-size="5.8" fill="#4a4a4a" stroke="#4a4a4a" stroke-width="0.1" text-anchor="middle" font-weight="normal" >0.4</text>
<line x1="489.175" y1="332.5" x2="489.175" y2="333.6" stroke="#888" stroke-width="0.7" />
<line x1="493.95" y1="332.5" x2="493.95" y2="334.0" stroke="#777" stroke-width="0.8" />
<text x="493.95" y="340.6" font-size="5.8" fill="#4a4a4a" stroke="#4a4a4a" stroke-width="0.1" text-anchor="middle" font-weight="normal" >0.5</text>
<line x1="498.725" y1="332.5" x2="498.725" y2="333.6" stroke="#888" stroke-width="0.7" />
<line x1="503.5" y1="332.5" x2="503.5" y2="334.0" stroke="#777" stroke-width="0.8" />
<text x="503.5" y="340.6" font-size="5.8" fill="#4a4a4a" stroke="#4a4a4a" stroke-width="0.1" text-anchor="middle" font-weight="normal" >0.6</text>
<line x1="508.27500000000003" y1="332.5" x2="508.27500000000003" y2="333.6" stroke="#888" stroke-width="0.7" />
<line x1="513.0500000000001" y1="332.5" x2="513.0500000000001" y2="334.0" stroke="#777" stroke-width="0.8" />
<text x="513.0500000000001" y="340.6" font-size="5.8" fill="#4a4a4a" stroke="#4a4a4a" stroke-width="0.1" text-anchor="middle" font-weight="normal" >0.7</text>
<line x1="517.825" y1="332.5" x2="517.825" y2="333.6" stroke="#888" stroke-width="0.7" />
<line x1="522.6" y1="332.5" x2="522.6" y2="334.0" stroke="#777" stroke-width="0.8" />
<text x="522.6" y="340.6" font-size="5.8" fill="#4a4a4a" stroke="#4a4a4a" stroke-width="0.1" text-anchor="middle" font-weight="normal" >0.8</text>
<line x1="444.59999999999997" y1="111.5" x2="446.2" y2="111.5" stroke="#777" stroke-width="0.8" />
<text x="443.8" y="113.6" font-size="5.8" fill="#4a4a4a" stroke="#4a4a4a" stroke-width="0.1" text-anchor="end" font-weight="normal" >0</text>
<line x1="445.09999999999997" y1="120.0" x2="446.2" y2="120.0" stroke="#888" stroke-width="0.7" />
<line x1="444.59999999999997" y1="128.5" x2="446.2" y2="128.5" stroke="#777" stroke-width="0.8" />
<text x="443.8" y="130.6" font-size="5.8" fill="#4a4a4a" stroke="#4a4a4a" stroke-width="0.1" text-anchor="end" font-weight="normal" >1</text>
<line x1="445.09999999999997" y1="137.0" x2="446.2" y2="137.0" stroke="#888" stroke-width="0.7" />
<line x1="444.59999999999997" y1="145.5" x2="446.2" y2="145.5" stroke="#777" stroke-width="0.8" />
<text x="443.8" y="147.6" font-size="5.8" fill="#4a4a4a" stroke="#4a4a4a" stroke-width="0.1" text-anchor="end" font-weight="normal" >2</text>
<line x1="445.09999999999997" y1="154.0" x2="446.2" y2="154.0" stroke="#888" stroke-width="0.7" />
<line x1="444.59999999999997" y1="162.5" x2="446.2" y2="162.5" stroke="#777" stroke-width="0.8" />
<text x="443.8" y="164.6" font-size="5.8" fill="#4a4a4a" stroke="#4a4a4a" stroke-width="0.1" text-anchor="end" font-weight="normal" >3</text>
<line x1="445.09999999999997" y1="171.0" x2="446.2" y2="171.0" stroke="#888" stroke-width="0.7" />
<line x1="444.59999999999997" y1="179.5" x2="446.2" y2="179.5" stroke="#777" stroke-width="0.8" />
<text x="443.8" y="181.6" font-size="5.8" fill="#4a4a4a" stroke="#4a4a4a" stroke-width="0.1" text-anchor="end" font-weight="normal" >4</text>
<line x1="445.09999999999997" y1="188.0" x2="446.2" y2="188.0" stroke="#888" stroke-width="0.7" />
<line x1="444.59999999999997" y1="196.5" x2="446.2" y2="196.5" stroke="#777" stroke-width="0.8" />
<text x="443.8" y="198.6" font-size="5.8" fill="#4a4a4a" stroke="#4a4a4a" stroke-width="0.1" text-anchor="end" font-weight="normal" >5</text>
<line x1="445.09999999999997" y1="205.0" x2="446.2" y2="205.0" stroke="#888" stroke-width="0.7" />
<line x1="444.59999999999997" y1="213.5" x2="446.2" y2="213.5" stroke="#777" stroke-width="0.8" />
<text x="443.8" y="215.6" font-size="5.8" fill="#4a4a4a" stroke="#4a4a4a" stroke-width="0.1" text-anchor="end" font-weight="normal" >6</text>
<line x1="445.09999999999997" y1="222.0" x2="446.2" y2="222.0" stroke="#888" stroke-width="0.7" />
<line x1="444.59999999999997" y1="230.5" x2="446.2" y2="230.5" stroke="#777" stroke-width="0.8" />
<text x="443.8" y="232.6" font-size="5.8" fill="#4a4a4a" stroke="#4a4a4a" stroke-width="0.1" text-anchor="end" font-weight="normal" >7</text>
<line x1="445.09999999999997" y1="239.0" x2="446.2" y2="239.0" stroke="#888" stroke-width="0.7" />
<line x1="444.59999999999997" y1="247.5" x2="446.2" y2="247.5" stroke="#777" stroke-width="0.8" />
<text x="443.8" y="249.6" font-size="5.8" fill="#4a4a4a" stroke="#4a4a4a" stroke-width="0.1" text-anchor="end" font-weight="normal" >8</text>
<line x1="445.09999999999997" y1="256.0" x2="446.2" y2="256.0" stroke="#888" stroke-width="0.7" />
<line x1="444.59999999999997" y1="264.5" x2="446.2" y2="264.5" stroke="#777" stroke-width="0.8" />
<text x="443.8" y="266.6" font-size="5.8" fill="#4a4a4a" stroke="#4a4a4a" stroke-width="0.1" text-anchor="end" font-weight="normal" >9</text>
<line x1="445.09999999999997" y1="273.0" x2="446.2" y2="273.0" stroke="#888" stroke-width="0.7" />
<line x1="444.59999999999997" y1="281.5" x2="446.2" y2="281.5" stroke="#777" stroke-width="0.8" />
<text x="443.8" y="283.6" font-size="5.8" fill="#4a4a4a" stroke="#4a4a4a" stroke-width="0.1" text-anchor="end" font-weight="normal" >10</text>
<line x1="445.09999999999997" y1="290.0" x2="446.2" y2="290.0" stroke="#888" stroke-width="0.7" />
<line x1="444.59999999999997" y1="298.5" x2="446.2" y2="298.5" stroke="#777" stroke-width="0.8" />
<text x="443.8" y="300.6" font-size="5.8" fill="#4a4a4a" stroke="#4a4a4a" stroke-width="0.1" text-anchor="end" font-weight="normal" >11</text>
<line x1="445.09999999999997" y1="307.0" x2="446.2" y2="307.0" stroke="#888" stroke-width="0.7" />
<line x1="444.59999999999997" y1="315.5" x2="446.2" y2="315.5" stroke="#777" stroke-width="0.8" />
<text x="443.8" y="317.6" font-size="5.8" fill="#4a4a4a" stroke="#4a4a4a" stroke-width="0.1" text-anchor="end" font-weight="normal" >12</text>
<line x1="445.09999999999997" y1="324.0" x2="446.2" y2="324.0" stroke="#888" stroke-width="0.7" />
<line x1="444.59999999999997" y1="332.5" x2="446.2" y2="332.5" stroke="#777" stroke-width="0.8" />
<text x="443.8" y="334.6" font-size="5.8" fill="#4a4a4a" stroke="#4a4a4a" stroke-width="0.1" text-anchor="end" font-weight="normal" >13</text>
<text x="484.4" y="347.4" font-size="5.3" fill="#4a4a4a" stroke="#4a4a4a" stroke-width="0.2" text-anchor="middle" font-weight="normal"  textLength="24.6" lengthAdjust="spacingAndGlyphs">CSR - CRR</text>
<text x="0" y="0" font-size="5.3" fill="#4a4a4a" text-anchor="middle" transform="translate(433.59999999999997,222) rotate(-90)">Depth (m)</text>
<line x1="446.8" y1="141.76" x2="522.6" y2="141.76" stroke="#a9c8ea" stroke-width="1" />
<path d="M481.79999999999995,138.35999999999999 L487.0,138.35999999999999 L484.4,141.16 Z" fill="#3f8ad2"/>
<text x="484.4" y="146.35999999999999" font-size="4.3" fill="#4a8ad0" text-anchor="middle">During earthq.</text>
<clipPath id="c2"><rect x="446.2" y="111" width="76.4" height="222"/></clipPath>
<polyline points="828.20,130.20 456.23,142.10 454.99,155.70 456.80,169.30 458.14,181.20 458.81,194.80 473.89,206.70 469.98,220.30 828.20,233.90 472.08,245.80 828.20,259.40 469.98,271.30 459.57,284.90 458.62,298.50 828.20,324.00" fill="none" stroke="#3b9ad8" stroke-width="1.3" stroke-linejoin="round" clip-path="url(#c2)"/>
<polyline points="461.50,130.20 461.50,131.40 461.49,132.97 461.48,134.87 461.51,137.06 461.61,139.49 461.80,142.10 462.12,145.05 462.55,148.40 463.04,151.98 463.56,155.64 464.06,159.20 464.50,162.50 464.88,165.53 465.24,168.42 465.59,171.21 465.91,173.96 466.22,176.71 466.50,179.50 466.78,182.33 467.05,185.17 467.31,188.00 467.53,190.83 467.70,193.67 467.80,196.50 467.84,199.29 467.81,202.04 467.74,204.79 467.63,207.58 467.48,210.47 467.30,213.50 466.99,216.66 466.53,219.92 466.03,223.28 465.61,226.72 465.39,230.26 465.50,233.90 466.09,237.75 467.10,241.83 468.31,246.01 469.51,250.14 470.48,254.09 471.00,257.70 470.96,260.99 470.51,264.06 469.83,266.94 469.10,269.66 468.50,272.24 468.20,274.70 468.25,276.68 468.53,278.10 468.92,279.38 469.36,280.93 469.75,283.20 470.00,286.60 470.10,291.79 470.13,298.56 470.11,306.04 470.07,313.36 470.02,319.64 470.00,324.00" fill="none" stroke="#ff5050" stroke-width="1.2" stroke-linejoin="round" />
<rect x="531.6" y="98.1" width="104.19999999999993" height="254.29999999999998" fill="#ffffff" stroke="#cfd9e4" stroke-width="1.3" />
<text x="590.25" y="108.3" font-size="5.6" fill="#1a1a1a" stroke="#1a1a1a" stroke-width="0.2" text-anchor="middle" font-weight="bold"  textLength="17.8" lengthAdjust="spacingAndGlyphs">FS Plot</text>
<rect x="553.1" y="111.5" width="25.208099999999945" height="221.0" fill="#ff0000" />
<rect x="578.3081" y="111.5" width="5.071900000000028" height="221.0" fill="#ff8000" />
<rect x="583.38" y="111.5" width="7.57000000000005" height="221.0" fill="#ffff00" />
<rect x="590.95" y="111.5" width="7.569999999999936" height="221.0" fill="#88cc00" />
<rect x="598.52" y="111.5" width="30.279999999999973" height="221.0" fill="#38a800" />
<line x1="572.025" y1="111.5" x2="572.025" y2="332.5" stroke="rgba(255,255,255,0.28)" stroke-width="0.7" />
<line x1="590.95" y1="111.5" x2="590.95" y2="332.5" stroke="rgba(255,255,255,0.28)" stroke-width="0.7" />
<line x1="609.875" y1="111.5" x2="609.875" y2="332.5" stroke="rgba(255,255,255,0.28)" stroke-width="0.7" />
<line x1="553.1" y1="128.5" x2="628.8" y2="128.5" stroke="rgba(255,255,255,0.28)" stroke-width="0.7" />
<line x1="553.1" y1="145.5" x2="628.8" y2="145.5" stroke="rgba(255,255,255,0.28)" stroke-width="0.7" />
<line x1="553.1" y1="162.5" x2="628.8" y2="162.5" stroke="rgba(255,255,255,0.28)" stroke-width="0.7" />
<line x1="553.1" y1="179.5" x2="628.8" y2="179.5" stroke="rgba(255,255,255,0.28)" stroke-width="0.7" />
<line x1="553.1" y1="196.5" x2="628.8" y2="196.5" stroke="rgba(255,255,255,0.28)" stroke-width="0.7" />
<line x1="553.1" y1="213.5" x2="628.8" y2="213.5" stroke="rgba(255,255,255,0.28)" stroke-width="0.7" />
<line x1="553.1" y1="230.5" x2="628.8" y2="230.5" stroke="rgba(255,255,255,0.28)" stroke-width="0.7" />
<line x1="553.1" y1="247.5" x2="628.8" y2="247.5" stroke="rgba(255,255,255,0.28)" stroke-width="0.7" />
<line x1="553.1" y1="264.5" x2="628.8" y2="264.5" stroke="rgba(255,255,255,0.28)" stroke-width="0.7" />
<line x1="553.1" y1="281.5" x2="628.8" y2="281.5" stroke="rgba(255,255,255,0.28)" stroke-width="0.7" />
<line x1="553.1" y1="298.5" x2="628.8" y2="298.5" stroke="rgba(255,255,255,0.28)" stroke-width="0.7" />
<line x1="553.1" y1="315.5" x2="628.8" y2="315.5" stroke="rgba(255,255,255,0.28)" stroke-width="0.7" />
<rect x="553.1" y="111.5" width="75.69999999999993" height="221.0" fill="none" stroke="#8a8a8a" stroke-width="1.2" />
<line x1="553.1" y1="111.5" x2="553.1" y2="333.1" stroke="#a8a8a8" stroke-width="1.5" />
<line x1="552.6" y1="332.5" x2="628.8" y2="332.5" stroke="#a8a8a8" stroke-width="1.4" />
<line x1="553.1" y1="332.5" x2="553.1" y2="334.0" stroke="#777" stroke-width="0.8" />
<text x="553.1" y="340.6" font-size="5.8" fill="#4a4a4a" stroke="#4a4a4a" stroke-width="0.1" text-anchor="middle" font-weight="normal" >0</text>
<line x1="562.5625" y1="332.5" x2="562.5625" y2="333.6" stroke="#888" stroke-width="0.7" />
<line x1="572.025" y1="332.5" x2="572.025" y2="334.0" stroke="#777" stroke-width="0.8" />
<text x="572.025" y="340.6" font-size="5.8" fill="#4a4a4a" stroke="#4a4a4a" stroke-width="0.1" text-anchor="middle" font-weight="normal" >0.5</text>
<line x1="581.4875" y1="332.5" x2="581.4875" y2="333.6" stroke="#888" stroke-width="0.7" />
<line x1="590.95" y1="332.5" x2="590.95" y2="334.0" stroke="#777" stroke-width="0.8" />
<text x="590.95" y="340.6" font-size="5.8" fill="#4a4a4a" stroke="#4a4a4a" stroke-width="0.1" text-anchor="middle" font-weight="normal" >1</text>
<line x1="600.4125" y1="332.5" x2="600.4125" y2="333.6" stroke="#888" stroke-width="0.7" />
<line x1="609.875" y1="332.5" x2="609.875" y2="334.0" stroke="#777" stroke-width="0.8" />
<text x="609.875" y="340.6" font-size="5.8" fill="#4a4a4a" stroke="#4a4a4a" stroke-width="0.1" text-anchor="middle" font-weight="normal" >1.5</text>
<line x1="619.3375" y1="332.5" x2="619.3375" y2="333.6" stroke="#888" stroke-width="0.7" />
<line x1="628.8" y1="332.5" x2="628.8" y2="334.0" stroke="#777" stroke-width="0.8" />
<text x="628.8" y="340.6" font-size="5.8" fill="#4a4a4a" stroke="#4a4a4a" stroke-width="0.1" text-anchor="middle" font-weight="normal" >2</text>
<line x1="551.5" y1="111.5" x2="553.1" y2="111.5" stroke="#777" stroke-width="0.8" />
<text x="550.7" y="113.6" font-size="5.8" fill="#4a4a4a" stroke="#4a4a4a" stroke-width="0.1" text-anchor="end" font-weight="normal" >0</text>
<line x1="552.0" y1="120.0" x2="553.1" y2="120.0" stroke="#888" stroke-width="0.7" />
<line x1="551.5" y1="128.5" x2="553.1" y2="128.5" stroke="#777" stroke-width="0.8" />
<text x="550.7" y="130.6" font-size="5.8" fill="#4a4a4a" stroke="#4a4a4a" stroke-width="0.1" text-anchor="end" font-weight="normal" >1</text>
<line x1="552.0" y1="137.0" x2="553.1" y2="137.0" stroke="#888" stroke-width="0.7" />
<line x1="551.5" y1="145.5" x2="553.1" y2="145.5" stroke="#777" stroke-width="0.8" />
<text x="550.7" y="147.6" font-size="5.8" fill="#4a4a4a" stroke="#4a4a4a" stroke-width="0.1" text-anchor="end" font-weight="normal" >2</text>
<line x1="552.0" y1="154.0" x2="553.1" y2="154.0" stroke="#888" stroke-width="0.7" />
<line x1="551.5" y1="162.5" x2="553.1" y2="162.5" stroke="#777" stroke-width="0.8" />
<text x="550.7" y="164.6" font-size="5.8" fill="#4a4a4a" stroke="#4a4a4a" stroke-width="0.1" text-anchor="end" font-weight="normal" >3</text>
<line x1="552.0" y1="171.0" x2="553.1" y2="171.0" stroke="#888" stroke-width="0.7" />
<line x1="551.5" y1="179.5" x2="553.1" y2="179.5" stroke="#777" stroke-width="0.8" />
<text x="550.7" y="181.6" font-size="5.8" fill="#4a4a4a" stroke="#4a4a4a" stroke-width="0.1" text-anchor="end" font-weight="normal" >4</text>
<line x1="552.0" y1="188.0" x2="553.1" y2="188.0" stroke="#888" stroke-width="0.7" />
<line x1="551.5" y1="196.5" x2="553.1" y2="196.5" stroke="#777" stroke-width="0.8" />
<text x="550.7" y="198.6" font-size="5.8" fill="#4a4a4a" stroke="#4a4a4a" stroke-width="0.1" text-anchor="end" font-weight="normal" >5</text>
<line x1="552.0" y1="205.0" x2="553.1" y2="205.0" stroke="#888" stroke-width="0.7" />
<line x1="551.5" y1="213.5" x2="553.1" y2="213.5" stroke="#777" stroke-width="0.8" />
<text x="550.7" y="215.6" font-size="5.8" fill="#4a4a4a" stroke="#4a4a4a" stroke-width="0.1" text-anchor="end" font-weight="normal" >6</text>
<line x1="552.0" y1="222.0" x2="553.1" y2="222.0" stroke="#888" stroke-width="0.7" />
<line x1="551.5" y1="230.5" x2="553.1" y2="230.5" stroke="#777" stroke-width="0.8" />
<text x="550.7" y="232.6" font-size="5.8" fill="#4a4a4a" stroke="#4a4a4a" stroke-width="0.1" text-anchor="end" font-weight="normal" >7</text>
<line x1="552.0" y1="239.0" x2="553.1" y2="239.0" stroke="#888" stroke-width="0.7" />
<line x1="551.5" y1="247.5" x2="553.1" y2="247.5" stroke="#777" stroke-width="0.8" />
<text x="550.7" y="249.6" font-size="5.8" fill="#4a4a4a" stroke="#4a4a4a" stroke-width="0.1" text-anchor="end" font-weight="normal" >8</text>
<line x1="552.0" y1="256.0" x2="553.1" y2="256.0" stroke="#888" stroke-width="0.7" />
<line x1="551.5" y1="264.5" x2="553.1" y2="264.5" stroke="#777" stroke-width="0.8" />
<text x="550.7" y="266.6" font-size="5.8" fill="#4a4a4a" stroke="#4a4a4a" stroke-width="0.1" text-anchor="end" font-weight="normal" >9</text>
<line x1="552.0" y1="273.0" x2="553.1" y2="273.0" stroke="#888" stroke-width="0.7" />
<line x1="551.5" y1="281.5" x2="553.1" y2="281.5" stroke="#777" stroke-width="0.8" />
<text x="550.7" y="283.6" font-size="5.8" fill="#4a4a4a" stroke="#4a4a4a" stroke-width="0.1" text-anchor="end" font-weight="normal" >10</text>
<line x1="552.0" y1="290.0" x2="553.1" y2="290.0" stroke="#888" stroke-width="0.7" />
<line x1="551.5" y1="298.5" x2="553.1" y2="298.5" stroke="#777" stroke-width="0.8" />
<text x="550.7" y="300.6" font-size="5.8" fill="#4a4a4a" stroke="#4a4a4a" stroke-width="0.1" text-anchor="end" font-weight="normal" >11</text>
<line x1="552.0" y1="307.0" x2="553.1" y2="307.0" stroke="#888" stroke-width="0.7" />
<line x1="551.5" y1="315.5" x2="553.1" y2="315.5" stroke="#777" stroke-width="0.8" />
<text x="550.7" y="317.6" font-size="5.8" fill="#4a4a4a" stroke="#4a4a4a" stroke-width="0.1" text-anchor="end" font-weight="normal" >12</text>
<line x1="552.0" y1="324.0" x2="553.1" y2="324.0" stroke="#888" stroke-width="0.7" />
<line x1="551.5" y1="332.5" x2="553.1" y2="332.5" stroke="#777" stroke-width="0.8" />
<text x="550.7" y="334.6" font-size="5.8" fill="#4a4a4a" stroke="#4a4a4a" stroke-width="0.1" text-anchor="end" font-weight="normal" >13</text>
<text x="590.95" y="347.4" font-size="5.3" fill="#4a4a4a" stroke="#4a4a4a" stroke-width="0.2" text-anchor="middle" font-weight="normal"  textLength="37.5" lengthAdjust="spacingAndGlyphs">Factor of Safety</text>
<text x="0" y="0" font-size="5.3" fill="#4a4a4a" text-anchor="middle" transform="translate(540.5,222) rotate(-90)">Depth (m)</text>
<line x1="553.7" y1="141.76" x2="628.8" y2="141.76" stroke="#a9c8ea" stroke-width="1" />
<path d="M588.4,138.35999999999999 L593.6,138.35999999999999 L591,141.16 Z" fill="#3f8ad2"/>
<text x="591" y="146.35999999999999" font-size="4.3" fill="#4a8ad0" text-anchor="middle">During earthq.</text>
<polyline points="628.80,130.20 578.08,142.10 571.27,155.70 573.16,169.30 574.67,181.20 575.05,194.80 605.33,206.70 595.49,220.30 628.80,233.90 598.52,245.80 628.80,259.40 593.98,271.30 575.05,284.90 572.78,298.50 628.80,324.00" fill="none" stroke="#2f6a92" stroke-width="1.5" stroke-linejoin="round" />
<polyline points="628.80,130.20 578.08,142.10 571.27,155.70 573.16,169.30 574.67,181.20 575.05,194.80 605.33,206.70 595.49,220.30 628.80,233.90 598.52,245.80 628.80,259.40 593.98,271.30 575.05,284.90 572.78,298.50 628.80,324.00" fill="none" stroke="#2a88b0" stroke-width="0.7" stroke-linejoin="round" />
<rect x="638.6" y="98.1" width="103.69999999999993" height="254.29999999999998" fill="#ffffff" stroke="#cfd9e4" stroke-width="1.3" />
<text x="696.8" y="108.3" font-size="5.6" fill="#1a1a1a" stroke="#1a1a1a" stroke-width="0.2" text-anchor="middle" font-weight="bold"  textLength="9.2" lengthAdjust="spacingAndGlyphs">LPI</text>
<rect x="659.3" y="111.5" width="19.100000000000023" height="221.0" fill="#ccff00" />
<rect x="678.4" y="111.5" width="38.200000000000045" height="221.0" fill="#ffaa00" />
<rect x="716.6" y="111.5" width="19.100000000000023" height="221.0" fill="#ff3300" />
<line x1="678.4" y1="111.5" x2="678.4" y2="332.5" stroke="rgba(255,255,255,0.28)" stroke-width="0.7" />
<line x1="697.5" y1="111.5" x2="697.5" y2="332.5" stroke="rgba(255,255,255,0.28)" stroke-width="0.7" />
<line x1="716.6" y1="111.5" x2="716.6" y2="332.5" stroke="rgba(255,255,255,0.28)" stroke-width="0.7" />
<line x1="659.3" y1="128.5" x2="735.7" y2="128.5" stroke="rgba(255,255,255,0.28)" stroke-width="0.7" />
<line x1="659.3" y1="145.5" x2="735.7" y2="145.5" stroke="rgba(255,255,255,0.28)" stroke-width="0.7" />
<line x1="659.3" y1="162.5" x2="735.7" y2="162.5" stroke="rgba(255,255,255,0.28)" stroke-width="0.7" />
<line x1="659.3" y1="179.5" x2="735.7" y2="179.5" stroke="rgba(255,255,255,0.28)" stroke-width="0.7" />
<line x1="659.3" y1="196.5" x2="735.7" y2="196.5" stroke="rgba(255,255,255,0.28)" stroke-width="0.7" />
<line x1="659.3" y1="213.5" x2="735.7" y2="213.5" stroke="rgba(255,255,255,0.28)" stroke-width="0.7" />
<line x1="659.3" y1="230.5" x2="735.7" y2="230.5" stroke="rgba(255,255,255,0.28)" stroke-width="0.7" />
<line x1="659.3" y1="247.5" x2="735.7" y2="247.5" stroke="rgba(255,255,255,0.28)" stroke-width="0.7" />
<line x1="659.3" y1="264.5" x2="735.7" y2="264.5" stroke="rgba(255,255,255,0.28)" stroke-width="0.7" />
<line x1="659.3" y1="281.5" x2="735.7" y2="281.5" stroke="rgba(255,255,255,0.28)" stroke-width="0.7" />
<line x1="659.3" y1="298.5" x2="735.7" y2="298.5" stroke="rgba(255,255,255,0.28)" stroke-width="0.7" />
<line x1="659.3" y1="315.5" x2="735.7" y2="315.5" stroke="rgba(255,255,255,0.28)" stroke-width="0.7" />
<rect x="659.3" y="111.5" width="76.40000000000009" height="221.0" fill="none" stroke="#8a8a8a" stroke-width="1.2" />
<line x1="659.3" y1="111.5" x2="659.3" y2="333.1" stroke="#a8a8a8" stroke-width="1.5" />
<line x1="658.8" y1="332.5" x2="735.7" y2="332.5" stroke="#a8a8a8" stroke-width="1.4" />
<line x1="659.3" y1="332.5" x2="659.3" y2="334.0" stroke="#777" stroke-width="0.8" />
<text x="659.3" y="340.6" font-size="5.8" fill="#4a4a4a" stroke="#4a4a4a" stroke-width="0.1" text-anchor="middle" font-weight="normal" >0</text>
<line x1="668.8499999999999" y1="332.5" x2="668.8499999999999" y2="333.6" stroke="#888" stroke-width="0.7" />
<line x1="678.4" y1="332.5" x2="678.4" y2="334.0" stroke="#777" stroke-width="0.8" />
<text x="678.4" y="340.6" font-size="5.8" fill="#4a4a4a" stroke="#4a4a4a" stroke-width="0.1" text-anchor="middle" font-weight="normal" >5</text>
<line x1="687.95" y1="332.5" x2="687.95" y2="333.6" stroke="#888" stroke-width="0.7" />
<line x1="697.5" y1="332.5" x2="697.5" y2="334.0" stroke="#777" stroke-width="0.8" />
<text x="697.5" y="340.6" font-size="5.8" fill="#4a4a4a" stroke="#4a4a4a" stroke-width="0.1" text-anchor="middle" font-weight="normal" >10</text>
<line x1="707.05" y1="332.5" x2="707.05" y2="333.6" stroke="#888" stroke-width="0.7" />
<line x1="716.6" y1="332.5" x2="716.6" y2="334.0" stroke="#777" stroke-width="0.8" />
<text x="716.6" y="340.6" font-size="5.8" fill="#4a4a4a" stroke="#4a4a4a" stroke-width="0.1" text-anchor="middle" font-weight="normal" >15</text>
<line x1="726.1500000000001" y1="332.5" x2="726.1500000000001" y2="333.6" stroke="#888" stroke-width="0.7" />
<line x1="735.7" y1="332.5" x2="735.7" y2="334.0" stroke="#777" stroke-width="0.8" />
<text x="735.7" y="340.6" font-size="5.8" fill="#4a4a4a" stroke="#4a4a4a" stroke-width="0.1" text-anchor="middle" font-weight="normal" >20</text>
<line x1="657.6999999999999" y1="111.5" x2="659.3" y2="111.5" stroke="#777" stroke-width="0.8" />
<text x="656.9" y="113.6" font-size="5.8" fill="#4a4a4a" stroke="#4a4a4a" stroke-width="0.1" text-anchor="end" font-weight="normal" >0</text>
<line x1="658.1999999999999" y1="120.0" x2="659.3" y2="120.0" stroke="#888" stroke-width="0.7" />
<line x1="657.6999999999999" y1="128.5" x2="659.3" y2="128.5" stroke="#777" stroke-width="0.8" />
<text x="656.9" y="130.6" font-size="5.8" fill="#4a4a4a" stroke="#4a4a4a" stroke-width="0.1" text-anchor="end" font-weight="normal" >1</text>
<line x1="658.1999999999999" y1="137.0" x2="659.3" y2="137.0" stroke="#888" stroke-width="0.7" />
<line x1="657.6999999999999" y1="145.5" x2="659.3" y2="145.5" stroke="#777" stroke-width="0.8" />
<text x="656.9" y="147.6" font-size="5.8" fill="#4a4a4a" stroke="#4a4a4a" stroke-width="0.1" text-anchor="end" font-weight="normal" >2</text>
<line x1="658.1999999999999" y1="154.0" x2="659.3" y2="154.0" stroke="#888" stroke-width="0.7" />
<line x1="657.6999999999999" y1="162.5" x2="659.3" y2="162.5" stroke="#777" stroke-width="0.8" />
<text x="656.9" y="164.6" font-size="5.8" fill="#4a4a4a" stroke="#4a4a4a" stroke-width="0.1" text-anchor="end" font-weight="normal" >3</text>
<line x1="658.1999999999999" y1="171.0" x2="659.3" y2="171.0" stroke="#888" stroke-width="0.7" />
<line x1="657.6999999999999" y1="179.5" x2="659.3" y2="179.5" stroke="#777" stroke-width="0.8" />
<text x="656.9" y="181.6" font-size="5.8" fill="#4a4a4a" stroke="#4a4a4a" stroke-width="0.1" text-anchor="end" font-weight="normal" >4</text>
<line x1="658.1999999999999" y1="188.0" x2="659.3" y2="188.0" stroke="#888" stroke-width="0.7" />
<line x1="657.6999999999999" y1="196.5" x2="659.3" y2="196.5" stroke="#777" stroke-width="0.8" />
<text x="656.9" y="198.6" font-size="5.8" fill="#4a4a4a" stroke="#4a4a4a" stroke-width="0.1" text-anchor="end" font-weight="normal" >5</text>
<line x1="658.1999999999999" y1="205.0" x2="659.3" y2="205.0" stroke="#888" stroke-width="0.7" />
<line x1="657.6999999999999" y1="213.5" x2="659.3" y2="213.5" stroke="#777" stroke-width="0.8" />
<text x="656.9" y="215.6" font-size="5.8" fill="#4a4a4a" stroke="#4a4a4a" stroke-width="0.1" text-anchor="end" font-weight="normal" >6</text>
<line x1="658.1999999999999" y1="222.0" x2="659.3" y2="222.0" stroke="#888" stroke-width="0.7" />
<line x1="657.6999999999999" y1="230.5" x2="659.3" y2="230.5" stroke="#777" stroke-width="0.8" />
<text x="656.9" y="232.6" font-size="5.8" fill="#4a4a4a" stroke="#4a4a4a" stroke-width="0.1" text-anchor="end" font-weight="normal" >7</text>
<line x1="658.1999999999999" y1="239.0" x2="659.3" y2="239.0" stroke="#888" stroke-width="0.7" />
<line x1="657.6999999999999" y1="247.5" x2="659.3" y2="247.5" stroke="#777" stroke-width="0.8" />
<text x="656.9" y="249.6" font-size="5.8" fill="#4a4a4a" stroke="#4a4a4a" stroke-width="0.1" text-anchor="end" font-weight="normal" >8</text>
<line x1="658.1999999999999" y1="256.0" x2="659.3" y2="256.0" stroke="#888" stroke-width="0.7" />
<line x1="657.6999999999999" y1="264.5" x2="659.3" y2="264.5" stroke="#777" stroke-width="0.8" />
<text x="656.9" y="266.6" font-size="5.8" fill="#4a4a4a" stroke="#4a4a4a" stroke-width="0.1" text-anchor="end" font-weight="normal" >9</text>
<line x1="658.1999999999999" y1="273.0" x2="659.3" y2="273.0" stroke="#888" stroke-width="0.7" />
<line x1="657.6999999999999" y1="281.5" x2="659.3" y2="281.5" stroke="#777" stroke-width="0.8" />
<text x="656.9" y="283.6" font-size="5.8" fill="#4a4a4a" stroke="#4a4a4a" stroke-width="0.1" text-anchor="end" font-weight="normal" >10</text>
<line x1="658.1999999999999" y1="290.0" x2="659.3" y2="290.0" stroke="#888" stroke-width="0.7" />
<line x1="657.6999999999999" y1="298.5" x2="659.3" y2="298.5" stroke="#777" stroke-width="0.8" />
<text x="656.9" y="300.6" font-size="5.8" fill="#4a4a4a" stroke="#4a4a4a" stroke-width="0.1" text-anchor="end" font-weight="normal" >11</text>
<line x1="658.1999999999999" y1="307.0" x2="659.3" y2="307.0" stroke="#888" stroke-width="0.7" />
<line x1="657.6999999999999" y1="315.5" x2="659.3" y2="315.5" stroke="#777" stroke-width="0.8" />
<text x="656.9" y="317.6" font-size="5.8" fill="#4a4a4a" stroke="#4a4a4a" stroke-width="0.1" text-anchor="end" font-weight="normal" >12</text>
<line x1="658.1999999999999" y1="324.0" x2="659.3" y2="324.0" stroke="#888" stroke-width="0.7" />
<line x1="657.6999999999999" y1="332.5" x2="659.3" y2="332.5" stroke="#777" stroke-width="0.8" />
<text x="656.9" y="334.6" font-size="5.8" fill="#4a4a4a" stroke="#4a4a4a" stroke-width="0.1" text-anchor="end" font-weight="normal" >13</text>
<text x="697.5" y="347.4" font-size="5.3" fill="#4a4a4a" stroke="#4a4a4a" stroke-width="0.2" text-anchor="middle" font-weight="normal"  textLength="48.2" lengthAdjust="spacingAndGlyphs">Liquefaction potential</text>
<text x="0" y="0" font-size="5.3" fill="#4a4a4a" text-anchor="middle" transform="translate(647.5,222) rotate(-90)">Depth (m)</text>
<line x1="659.9" y1="141.76" x2="735.7" y2="141.76" stroke="#a9c8ea" stroke-width="1" />
<path d="M694.9,138.35999999999999 L700.1,138.35999999999999 L697.5,141.16 Z" fill="#3f8ad2"/>
<text x="697.5" y="146.35999999999999" font-size="4.3" fill="#4a8ad0" text-anchor="middle">During earthq.</text>
<polyline points="659.30,130.20 667.67,142.10 681.49,155.70 693.37,169.30 702.50,181.20 712.25,194.80 712.25,271.30 725.00,298.50 725.00,324.00" fill="none" stroke="#4f7f90" stroke-width="1.4" stroke-linejoin="round" />
<polyline points="659.30,130.20 667.67,142.10 681.49,155.70 693.37,169.30 702.50,181.20 712.25,194.80 712.25,271.30 725.00,298.50 725.00,324.00" fill="none" stroke="#3f96ac" stroke-width="0.6" stroke-linejoin="round" />
<rect x="744.6" y="98.1" width="104.0" height="254.29999999999998" fill="#ffffff" stroke="#cfd9e4" stroke-width="1.3" />
<text x="803.0" y="108.3" font-size="5.6" fill="#1a1a1a" stroke="#1a1a1a" stroke-width="0.2" text-anchor="middle" font-weight="bold"  textLength="65.3" lengthAdjust="spacingAndGlyphs">Vertical Liq. Settlements</text>
<line x1="780.72" y1="111.5" x2="780.72" y2="332.5" stroke="#eaeaea" stroke-width="0.7" />
<line x1="796.04" y1="111.5" x2="796.04" y2="332.5" stroke="#eaeaea" stroke-width="0.7" />
<line x1="811.36" y1="111.5" x2="811.36" y2="332.5" stroke="#eaeaea" stroke-width="0.7" />
<line x1="826.68" y1="111.5" x2="826.68" y2="332.5" stroke="#eaeaea" stroke-width="0.7" />
<line x1="765.4" y1="128.5" x2="842.0" y2="128.5" stroke="#eaeaea" stroke-width="0.7" />
<line x1="765.4" y1="145.5" x2="842.0" y2="145.5" stroke="#eaeaea" stroke-width="0.7" />
<line x1="765.4" y1="162.5" x2="842.0" y2="162.5" stroke="#eaeaea" stroke-width="0.7" />
<line x1="765.4" y1="179.5" x2="842.0" y2="179.5" stroke="#eaeaea" stroke-width="0.7" />
<line x1="765.4" y1="196.5" x2="842.0" y2="196.5" stroke="#eaeaea" stroke-width="0.7" />
<line x1="765.4" y1="213.5" x2="842.0" y2="213.5" stroke="#eaeaea" stroke-width="0.7" />
<line x1="765.4" y1="230.5" x2="842.0" y2="230.5" stroke="#eaeaea" stroke-width="0.7" />
<line x1="765.4" y1="247.5" x2="842.0" y2="247.5" stroke="#eaeaea" stroke-width="0.7" />
<line x1="765.4" y1="264.5" x2="842.0" y2="264.5" stroke="#eaeaea" stroke-width="0.7" />
<line x1="765.4" y1="281.5" x2="842.0" y2="281.5" stroke="#eaeaea" stroke-width="0.7" />
<line x1="765.4" y1="298.5" x2="842.0" y2="298.5" stroke="#eaeaea" stroke-width="0.7" />
<line x1="765.4" y1="315.5" x2="842.0" y2="315.5" stroke="#eaeaea" stroke-width="0.7" />
<rect x="765.4" y="111.5" width="76.60000000000002" height="221.0" fill="none" stroke="#aaaaaa" stroke-width="1.2" />
<line x1="765.4" y1="111.5" x2="765.4" y2="333.1" stroke="#a8a8a8" stroke-width="1.5" />
<line x1="764.9" y1="332.5" x2="842.0" y2="332.5" stroke="#a8a8a8" stroke-width="1.4" />
<line x1="765.4" y1="332.5" x2="765.4" y2="334.0" stroke="#777" stroke-width="0.8" />
<text x="765.4" y="340.6" font-size="5.8" fill="#4a4a4a" stroke="#4a4a4a" stroke-width="0.1" text-anchor="middle" font-weight="normal" >0</text>
<line x1="773.06" y1="332.5" x2="773.06" y2="333.6" stroke="#888" stroke-width="0.7" />
<line x1="780.72" y1="332.5" x2="780.72" y2="334.0" stroke="#777" stroke-width="0.8" />
<text x="780.72" y="340.6" font-size="5.8" fill="#4a4a4a" stroke="#4a4a4a" stroke-width="0.1" text-anchor="middle" font-weight="normal" >5</text>
<line x1="788.38" y1="332.5" x2="788.38" y2="333.6" stroke="#888" stroke-width="0.7" />
<line x1="796.04" y1="332.5" x2="796.04" y2="334.0" stroke="#777" stroke-width="0.8" />
<text x="796.04" y="340.6" font-size="5.8" fill="#4a4a4a" stroke="#4a4a4a" stroke-width="0.1" text-anchor="middle" font-weight="normal" >10</text>
<line x1="803.7" y1="332.5" x2="803.7" y2="333.6" stroke="#888" stroke-width="0.7" />
<line x1="811.36" y1="332.5" x2="811.36" y2="334.0" stroke="#777" stroke-width="0.8" />
<text x="811.36" y="340.6" font-size="5.8" fill="#4a4a4a" stroke="#4a4a4a" stroke-width="0.1" text-anchor="middle" font-weight="normal" >15</text>
<line x1="819.02" y1="332.5" x2="819.02" y2="333.6" stroke="#888" stroke-width="0.7" />
<line x1="826.68" y1="332.5" x2="826.68" y2="334.0" stroke="#777" stroke-width="0.8" />
<text x="826.68" y="340.6" font-size="5.8" fill="#4a4a4a" stroke="#4a4a4a" stroke-width="0.1" text-anchor="middle" font-weight="normal" >20</text>
<line x1="834.34" y1="332.5" x2="834.34" y2="333.6" stroke="#888" stroke-width="0.7" />
<line x1="842.0" y1="332.5" x2="842.0" y2="334.0" stroke="#777" stroke-width="0.8" />
<text x="842.0" y="340.6" font-size="5.8" fill="#4a4a4a" stroke="#4a4a4a" stroke-width="0.1" text-anchor="middle" font-weight="normal" >25</text>
<line x1="763.8" y1="111.5" x2="765.4" y2="111.5" stroke="#777" stroke-width="0.8" />
<text x="763.0" y="113.6" font-size="5.8" fill="#4a4a4a" stroke="#4a4a4a" stroke-width="0.1" text-anchor="end" font-weight="normal" >0</text>
<line x1="764.3" y1="120.0" x2="765.4" y2="120.0" stroke="#888" stroke-width="0.7" />
<line x1="763.8" y1="128.5" x2="765.4" y2="128.5" stroke="#777" stroke-width="0.8" />
<text x="763.0" y="130.6" font-size="5.8" fill="#4a4a4a" stroke="#4a4a4a" stroke-width="0.1" text-anchor="end" font-weight="normal" >1</text>
<line x1="764.3" y1="137.0" x2="765.4" y2="137.0" stroke="#888" stroke-width="0.7" />
<line x1="763.8" y1="145.5" x2="765.4" y2="145.5" stroke="#777" stroke-width="0.8" />
<text x="763.0" y="147.6" font-size="5.8" fill="#4a4a4a" stroke="#4a4a4a" stroke-width="0.1" text-anchor="end" font-weight="normal" >2</text>
<line x1="764.3" y1="154.0" x2="765.4" y2="154.0" stroke="#888" stroke-width="0.7" />
<line x1="763.8" y1="162.5" x2="765.4" y2="162.5" stroke="#777" stroke-width="0.8" />
<text x="763.0" y="164.6" font-size="5.8" fill="#4a4a4a" stroke="#4a4a4a" stroke-width="0.1" text-anchor="end" font-weight="normal" >3</text>
<line x1="764.3" y1="171.0" x2="765.4" y2="171.0" stroke="#888" stroke-width="0.7" />
<line x1="763.8" y1="179.5" x2="765.4" y2="179.5" stroke="#777" stroke-width="0.8" />
<text x="763.0" y="181.6" font-size="5.8" fill="#4a4a4a" stroke="#4a4a4a" stroke-width="0.1" text-anchor="end" font-weight="normal" >4</text>
<line x1="764.3" y1="188.0" x2="765.4" y2="188.0" stroke="#888" stroke-width="0.7" />
<line x1="763.8" y1="196.5" x2="765.4" y2="196.5" stroke="#777" stroke-width="0.8" />
<text x="763.0" y="198.6" font-size="5.8" fill="#4a4a4a" stroke="#4a4a4a" stroke-width="0.1" text-anchor="end" font-weight="normal" >5</text>
<line x1="764.3" y1="205.0" x2="765.4" y2="205.0" stroke="#888" stroke-width="0.7" />
<line x1="763.8" y1="213.5" x2="765.4" y2="213.5" stroke="#777" stroke-width="0.8" />
<text x="763.0" y="215.6" font-size="5.8" fill="#4a4a4a" stroke="#4a4a4a" stroke-width="0.1" text-anchor="end" font-weight="normal" >6</text>
<line x1="764.3" y1="222.0" x2="765.4" y2="222.0" stroke="#888" stroke-width="0.7" />
<line x1="763.8" y1="230.5" x2="765.4" y2="230.5" stroke="#777" stroke-width="0.8" />
<text x="763.0" y="232.6" font-size="5.8" fill="#4a4a4a" stroke="#4a4a4a" stroke-width="0.1" text-anchor="end" font-weight="normal" >7</text>
<line x1="764.3" y1="239.0" x2="765.4" y2="239.0" stroke="#888" stroke-width="0.7" />
<line x1="763.8" y1="247.5" x2="765.4" y2="247.5" stroke="#777" stroke-width="0.8" />
<text x="763.0" y="249.6" font-size="5.8" fill="#4a4a4a" stroke="#4a4a4a" stroke-width="0.1" text-anchor="end" font-weight="normal" >8</text>
<line x1="764.3" y1="256.0" x2="765.4" y2="256.0" stroke="#888" stroke-width="0.7" />
<line x1="763.8" y1="264.5" x2="765.4" y2="264.5" stroke="#777" stroke-width="0.8" />
<text x="763.0" y="266.6" font-size="5.8" fill="#4a4a4a" stroke="#4a4a4a" stroke-width="0.1" text-anchor="end" font-weight="normal" >9</text>
<line x1="764.3" y1="273.0" x2="765.4" y2="273.0" stroke="#888" stroke-width="0.7" />
<line x1="763.8" y1="281.5" x2="765.4" y2="281.5" stroke="#777" stroke-width="0.8" />
<text x="763.0" y="283.6" font-size="5.8" fill="#4a4a4a" stroke="#4a4a4a" stroke-width="0.1" text-anchor="end" font-weight="normal" >10</text>
<line x1="764.3" y1="290.0" x2="765.4" y2="290.0" stroke="#888" stroke-width="0.7" />
<line x1="763.8" y1="298.5" x2="765.4" y2="298.5" stroke="#777" stroke-width="0.8" />
<text x="763.0" y="300.6" font-size="5.8" fill="#4a4a4a" stroke="#4a4a4a" stroke-width="0.1" text-anchor="end" font-weight="normal" >11</text>
<line x1="764.3" y1="307.0" x2="765.4" y2="307.0" stroke="#888" stroke-width="0.7" />
<line x1="763.8" y1="315.5" x2="765.4" y2="315.5" stroke="#777" stroke-width="0.8" />
<text x="763.0" y="317.6" font-size="5.8" fill="#4a4a4a" stroke="#4a4a4a" stroke-width="0.1" text-anchor="end" font-weight="normal" >12</text>
<line x1="764.3" y1="324.0" x2="765.4" y2="324.0" stroke="#888" stroke-width="0.7" />
<line x1="763.8" y1="332.5" x2="765.4" y2="332.5" stroke="#777" stroke-width="0.8" />
<text x="763.0" y="334.6" font-size="5.8" fill="#4a4a4a" stroke="#4a4a4a" stroke-width="0.1" text-anchor="end" font-weight="normal" >13</text>
<text x="803.7" y="347.4" font-size="5.3" fill="#4a4a4a" stroke="#4a4a4a" stroke-width="0.2" text-anchor="middle" font-weight="normal"  textLength="49.3" lengthAdjust="spacingAndGlyphs">Cuml. Settlement (cm)</text>
<text x="0" y="0" font-size="5.3" fill="#4a4a4a" text-anchor="middle" transform="translate(753.5,222) rotate(-90)">Depth (m)</text>
<line x1="766.0" y1="141.76" x2="842.0" y2="141.76" stroke="#a9c8ea" stroke-width="1" />
<path d="M801.1,138.35999999999999 L806.3000000000001,138.35999999999999 L803.7,141.16 Z" fill="#3f8ad2"/>
<text x="803.7" y="146.35999999999999" font-size="4.3" fill="#4a8ad0" text-anchor="middle">During earthq.</text>
<polyline points="826.40,130.20 826.40,142.10 816.40,157.40 804.70,171.85 796.20,181.20 788.70,193.10 780.60,206.70 780.30,284.90 772.80,298.50 766.00,324.00" fill="none" stroke="#3b9ad8" stroke-width="1.3" stroke-linejoin="round" />
<rect x="850.4" y="98.1" width="105.0" height="254.29999999999998" fill="#ffffff" stroke="#cfd9e4" stroke-width="1.3" />
<text x="909.5999999999999" y="108.3" font-size="5.6" fill="#1a1a1a" stroke="#1a1a1a" stroke-width="0.2" text-anchor="middle" font-weight="bold"  textLength="69.9" lengthAdjust="spacingAndGlyphs">Lateral Liq. Displacements</text>
<line x1="881.725" y1="111.5" x2="881.725" y2="332.5" stroke="#eaeaea" stroke-width="0.7" />
<line x1="891.25" y1="111.5" x2="891.25" y2="332.5" stroke="#eaeaea" stroke-width="0.7" />
<line x1="900.775" y1="111.5" x2="900.775" y2="332.5" stroke="#eaeaea" stroke-width="0.7" />
<line x1="910.3" y1="111.5" x2="910.3" y2="332.5" stroke="#eaeaea" stroke-width="0.7" />
<line x1="919.825" y1="111.5" x2="919.825" y2="332.5" stroke="#eaeaea" stroke-width="0.7" />
<line x1="929.35" y1="111.5" x2="929.35" y2="332.5" stroke="#eaeaea" stroke-width="0.7" />
<line x1="938.875" y1="111.5" x2="938.875" y2="332.5" stroke="#eaeaea" stroke-width="0.7" />
<line x1="872.2" y1="128.5" x2="948.4" y2="128.5" stroke="#eaeaea" stroke-width="0.7" />
<line x1="872.2" y1="145.5" x2="948.4" y2="145.5" stroke="#eaeaea" stroke-width="0.7" />
<line x1="872.2" y1="162.5" x2="948.4" y2="162.5" stroke="#eaeaea" stroke-width="0.7" />
<line x1="872.2" y1="179.5" x2="948.4" y2="179.5" stroke="#eaeaea" stroke-width="0.7" />
<line x1="872.2" y1="196.5" x2="948.4" y2="196.5" stroke="#eaeaea" stroke-width="0.7" />
<line x1="872.2" y1="213.5" x2="948.4" y2="213.5" stroke="#eaeaea" stroke-width="0.7" />
<line x1="872.2" y1="230.5" x2="948.4" y2="230.5" stroke="#eaeaea" stroke-width="0.7" />
<line x1="872.2" y1="247.5" x2="948.4" y2="247.5" stroke="#eaeaea" stroke-width="0.7" />
<line x1="872.2" y1="264.5" x2="948.4" y2="264.5" stroke="#eaeaea" stroke-width="0.7" />
<line x1="872.2" y1="281.5" x2="948.4" y2="281.5" stroke="#eaeaea" stroke-width="0.7" />
<line x1="872.2" y1="298.5" x2="948.4" y2="298.5" stroke="#eaeaea" stroke-width="0.7" />
<line x1="872.2" y1="315.5" x2="948.4" y2="315.5" stroke="#eaeaea" stroke-width="0.7" />
<rect x="872.2" y="111.5" width="76.19999999999993" height="221.0" fill="none" stroke="#aaaaaa" stroke-width="1.2" />
<line x1="872.2" y1="111.5" x2="872.2" y2="333.1" stroke="#a8a8a8" stroke-width="1.5" />
<line x1="871.7" y1="332.5" x2="948.4" y2="332.5" stroke="#a8a8a8" stroke-width="1.4" />
<line x1="872.2" y1="332.5" x2="872.2" y2="334.0" stroke="#777" stroke-width="0.8" />
<text x="872.2" y="340.6" font-size="5.8" fill="#4a4a4a" stroke="#4a4a4a" stroke-width="0.1" text-anchor="middle" font-weight="normal" >0</text>
<line x1="876.9625000000001" y1="332.5" x2="876.9625000000001" y2="333.6" stroke="#888" stroke-width="0.7" />
<line x1="881.725" y1="332.5" x2="881.725" y2="334.0" stroke="#777" stroke-width="0.8" />
<text x="881.725" y="340.6" font-size="5.8" fill="#4a4a4a" stroke="#4a4a4a" stroke-width="0.1" text-anchor="middle" font-weight="normal" >0.5</text>
<line x1="886.4875000000001" y1="332.5" x2="886.4875000000001" y2="333.6" stroke="#888" stroke-width="0.7" />
<line x1="891.25" y1="332.5" x2="891.25" y2="334.0" stroke="#777" stroke-width="0.8" />
<text x="891.25" y="340.6" font-size="5.8" fill="#4a4a4a" stroke="#4a4a4a" stroke-width="0.1" text-anchor="middle" font-weight="normal" >1</text>
<line x1="896.0125" y1="332.5" x2="896.0125" y2="333.6" stroke="#888" stroke-width="0.7" />
<line x1="900.775" y1="332.5" x2="900.775" y2="334.0" stroke="#777" stroke-width="0.8" />
<text x="900.775" y="340.6" font-size="5.8" fill="#4a4a4a" stroke="#4a4a4a" stroke-width="0.1" text-anchor="middle" font-weight="normal" >1.5</text>
<line x1="905.5375" y1="332.5" x2="905.5375" y2="333.6" stroke="#888" stroke-width="0.7" />
<line x1="910.3" y1="332.5" x2="910.3" y2="334.0" stroke="#777" stroke-width="0.8" />
<text x="910.3" y="340.6" font-size="5.8" fill="#4a4a4a" stroke="#4a4a4a" stroke-width="0.1" text-anchor="middle" font-weight="normal" >2</text>
<line x1="915.0625" y1="332.5" x2="915.0625" y2="333.6" stroke="#888" stroke-width="0.7" />
<line x1="919.825" y1="332.5" x2="919.825" y2="334.0" stroke="#777" stroke-width="0.8" />
<text x="919.825" y="340.6" font-size="5.8" fill="#4a4a4a" stroke="#4a4a4a" stroke-width="0.1" text-anchor="middle" font-weight="normal" >2.5</text>
<line x1="924.5875" y1="332.5" x2="924.5875" y2="333.6" stroke="#888" stroke-width="0.7" />
<line x1="929.35" y1="332.5" x2="929.35" y2="334.0" stroke="#777" stroke-width="0.8" />
<text x="929.35" y="340.6" font-size="5.8" fill="#4a4a4a" stroke="#4a4a4a" stroke-width="0.1" text-anchor="middle" font-weight="normal" >3</text>
<line x1="934.1125" y1="332.5" x2="934.1125" y2="333.6" stroke="#888" stroke-width="0.7" />
<line x1="938.875" y1="332.5" x2="938.875" y2="334.0" stroke="#777" stroke-width="0.8" />
<text x="938.875" y="340.6" font-size="5.8" fill="#4a4a4a" stroke="#4a4a4a" stroke-width="0.1" text-anchor="middle" font-weight="normal" >3.5</text>
<line x1="943.6375" y1="332.5" x2="943.6375" y2="333.6" stroke="#888" stroke-width="0.7" />
<line x1="948.4" y1="332.5" x2="948.4" y2="334.0" stroke="#777" stroke-width="0.8" />
<text x="948.4" y="340.6" font-size="5.8" fill="#4a4a4a" stroke="#4a4a4a" stroke-width="0.1" text-anchor="middle" font-weight="normal" >4</text>
<line x1="870.6" y1="111.5" x2="872.2" y2="111.5" stroke="#777" stroke-width="0.8" />
<text x="869.8000000000001" y="113.6" font-size="5.8" fill="#4a4a4a" stroke="#4a4a4a" stroke-width="0.1" text-anchor="end" font-weight="normal" >0</text>
<line x1="871.1" y1="120.0" x2="872.2" y2="120.0" stroke="#888" stroke-width="0.7" />
<line x1="870.6" y1="128.5" x2="872.2" y2="128.5" stroke="#777" stroke-width="0.8" />
<text x="869.8000000000001" y="130.6" font-size="5.8" fill="#4a4a4a" stroke="#4a4a4a" stroke-width="0.1" text-anchor="end" font-weight="normal" >1</text>
<line x1="871.1" y1="137.0" x2="872.2" y2="137.0" stroke="#888" stroke-width="0.7" />
<line x1="870.6" y1="145.5" x2="872.2" y2="145.5" stroke="#777" stroke-width="0.8" />
<text x="869.8000000000001" y="147.6" font-size="5.8" fill="#4a4a4a" stroke="#4a4a4a" stroke-width="0.1" text-anchor="end" font-weight="normal" >2</text>
<line x1="871.1" y1="154.0" x2="872.2" y2="154.0" stroke="#888" stroke-width="0.7" />
<line x1="870.6" y1="162.5" x2="872.2" y2="162.5" stroke="#777" stroke-width="0.8" />
<text x="869.8000000000001" y="164.6" font-size="5.8" fill="#4a4a4a" stroke="#4a4a4a" stroke-width="0.1" text-anchor="end" font-weight="normal" >3</text>
<line x1="871.1" y1="171.0" x2="872.2" y2="171.0" stroke="#888" stroke-width="0.7" />
<line x1="870.6" y1="179.5" x2="872.2" y2="179.5" stroke="#777" stroke-width="0.8" />
<text x="869.8000000000001" y="181.6" font-size="5.8" fill="#4a4a4a" stroke="#4a4a4a" stroke-width="0.1" text-anchor="end" font-weight="normal" >4</text>
<line x1="871.1" y1="188.0" x2="872.2" y2="188.0" stroke="#888" stroke-width="0.7" />
<line x1="870.6" y1="196.5" x2="872.2" y2="196.5" stroke="#777" stroke-width="0.8" />
<text x="869.8000000000001" y="198.6" font-size="5.8" fill="#4a4a4a" stroke="#4a4a4a" stroke-width="0.1" text-anchor="end" font-weight="normal" >5</text>
<line x1="871.1" y1="205.0" x2="872.2" y2="205.0" stroke="#888" stroke-width="0.7" />
<line x1="870.6" y1="213.5" x2="872.2" y2="213.5" stroke="#777" stroke-width="0.8" />
<text x="869.8000000000001" y="215.6" font-size="5.8" fill="#4a4a4a" stroke="#4a4a4a" stroke-width="0.1" text-anchor="end" font-weight="normal" >6</text>
<line x1="871.1" y1="222.0" x2="872.2" y2="222.0" stroke="#888" stroke-width="0.7" />
<line x1="870.6" y1="230.5" x2="872.2" y2="230.5" stroke="#777" stroke-width="0.8" />
<text x="869.8000000000001" y="232.6" font-size="5.8" fill="#4a4a4a" stroke="#4a4a4a" stroke-width="0.1" text-anchor="end" font-weight="normal" >7</text>
<line x1="871.1" y1="239.0" x2="872.2" y2="239.0" stroke="#888" stroke-width="0.7" />
<line x1="870.6" y1="247.5" x2="872.2" y2="247.5" stroke="#777" stroke-width="0.8" />
<text x="869.8000000000001" y="249.6" font-size="5.8" fill="#4a4a4a" stroke="#4a4a4a" stroke-width="0.1" text-anchor="end" font-weight="normal" >8</text>
<line x1="871.1" y1="256.0" x2="872.2" y2="256.0" stroke="#888" stroke-width="0.7" />
<line x1="870.6" y1="264.5" x2="872.2" y2="264.5" stroke="#777" stroke-width="0.8" />
<text x="869.8000000000001" y="266.6" font-size="5.8" fill="#4a4a4a" stroke="#4a4a4a" stroke-width="0.1" text-anchor="end" font-weight="normal" >9</text>
<line x1="871.1" y1="273.0" x2="872.2" y2="273.0" stroke="#888" stroke-width="0.7" />
<line x1="870.6" y1="281.5" x2="872.2" y2="281.5" stroke="#777" stroke-width="0.8" />
<text x="869.8000000000001" y="283.6" font-size="5.8" fill="#4a4a4a" stroke="#4a4a4a" stroke-width="0.1" text-anchor="end" font-weight="normal" >10</text>
<line x1="871.1" y1="290.0" x2="872.2" y2="290.0" stroke="#888" stroke-width="0.7" />
<line x1="870.6" y1="298.5" x2="872.2" y2="298.5" stroke="#777" stroke-width="0.8" />
<text x="869.8000000000001" y="300.6" font-size="5.8" fill="#4a4a4a" stroke="#4a4a4a" stroke-width="0.1" text-anchor="end" font-weight="normal" >11</text>
<line x1="871.1" y1="307.0" x2="872.2" y2="307.0" stroke="#888" stroke-width="0.7" />
<line x1="870.6" y1="315.5" x2="872.2" y2="315.5" stroke="#777" stroke-width="0.8" />
<text x="869.8000000000001" y="317.6" font-size="5.8" fill="#4a4a4a" stroke="#4a4a4a" stroke-width="0.1" text-anchor="end" font-weight="normal" >12</text>
<line x1="871.1" y1="324.0" x2="872.2" y2="324.0" stroke="#888" stroke-width="0.7" />
<line x1="870.6" y1="332.5" x2="872.2" y2="332.5" stroke="#777" stroke-width="0.8" />
<text x="869.8000000000001" y="334.6" font-size="5.8" fill="#4a4a4a" stroke="#4a4a4a" stroke-width="0.1" text-anchor="end" font-weight="normal" >13</text>
<text x="910.3" y="347.4" font-size="5.3" fill="#4a4a4a" stroke="#4a4a4a" stroke-width="0.2" text-anchor="middle" font-weight="normal"  textLength="53.6" lengthAdjust="spacingAndGlyphs">Cuml. Displacement (m)</text>
<text x="0" y="0" font-size="5.3" fill="#4a4a4a" text-anchor="middle" transform="translate(859.3,222) rotate(-90)">Depth (m)</text>
<line x1="872.8000000000001" y1="141.76" x2="948.4" y2="141.76" stroke="#a9c8ea" stroke-width="1" />
<path d="M907.8,138.35999999999999 L913.0,138.35999999999999 L910.4,141.16 Z" fill="#3f8ad2"/>
<text x="910.4" y="146.35999999999999" font-size="4.3" fill="#4a8ad0" text-anchor="middle">During earthq.</text>
<rect x="474" y="355" width="160.8" height="3.2" fill="#ecebea" stroke="#d8d8d8" stroke-width="0.5" />
<line x1="476" y1="356.6" x2="633" y2="356.6" stroke="#b8d0ec" stroke-width="0.8" />
<rect x="477" y="355.5" width="2.2" height="2.2" fill="#4a90e0" />
<rect x="630.5" y="355.5" width="2.2" height="2.2" fill="#4a90e0" />
<text x="157.8" y="363.4" font-size="5.8" fill="#4a4a4a" stroke="#4a4a4a" stroke-width="0.2" text-anchor="start" font-weight="normal"  textLength="35.2" lengthAdjust="spacingAndGlyphs">Tabular Results</text>
<line x1="153" y1="361.3" x2="156.8" y2="361.3" stroke="#dddddd" stroke-width="0.8" />
<line x1="194" y1="361.3" x2="956.5" y2="361.3" stroke="#dddddd" stroke-width="0.8" />
<rect x="153.5" y="364.2" width="803" height="15.3" fill="#f5f6f8" />
<rect x="159" y="367.3" width="5" height="5.8" fill="#dce8f8" stroke="#8fb0e0" stroke-width="0.6" />
<rect x="161.3" y="369.8" width="5" height="5.8" fill="#dce8f8" stroke="#8fb0e0" stroke-width="0.6" />
<text x="168" y="373.4" font-size="5.8" fill="#5a5a5a" stroke="#5a5a5a" stroke-width="0.2" text-anchor="start" font-weight="normal"  textLength="35.6" lengthAdjust="spacingAndGlyphs">Copy Selection</text>
<rect x="209.4" y="367.5" width="7.2" height="8.2" fill="#d4e4f8" rx="1.2"/>
<rect x="210.6" y="369.3" width="4.6" height="4.6" fill="#3a9a3a" />
<text x="218.2" y="373.5" font-size="5.8" fill="#5a5a5a" stroke="#5a5a5a" stroke-width="0.2" text-anchor="start" font-weight="normal"  textLength="36.5" lengthAdjust="spacingAndGlyphs">Export to Excel</text>
<text x="257" y="373.5" font-size="4" fill="#555" stroke="#555" stroke-width="0.2" text-anchor="start" font-weight="normal" >▾</text>
<line x1="263.2" y1="367" x2="263.2" y2="377" stroke="#cccccc" stroke-width="0.7" />
<polyline points="269.00,375.00 273.00,375.00 273.00,368.50" fill="none" stroke="#777" stroke-width="0.7" stroke-linejoin="round" />
<line x1="270" y1="370" x2="272" y2="373" stroke="#777" stroke-width="0.6" />
<rect x="268" y="368" width="1.6" height="1.6" fill="#3070e0" />
<rect x="279.5" y="368.5" width="4.5" height="6.5" fill="none" stroke="#777" stroke-width="0.7" />
<line x1="280.5" y1="370.5" x2="283" y2="370.5" stroke="#777" stroke-width="0.5" />
<line x1="280.5" y1="372.5" x2="283" y2="372.5" stroke="#777" stroke-width="0.5" />
<rect x="278.5" y="372" width="1.6" height="1.6" fill="#3070e0" />
<clipPath id="tc"><rect x="156.2" y="380" width="789.6" height="115"/></clipPath>
<rect x="156.8" y="380.2" width="796.2" height="123.3" fill="#ffffff" stroke="#c4d0dc" stroke-width="0.8" />
<g clip-path="url(#tc)">
<rect x="156.8" y="380.2" width="800" height="21.95" fill="#eeeeee" />
<rect x="156.8" y="402.15" width="19.599999999999994" height="92.25" fill="#eeeeee" />
<text x="166.60000000000002" y="387.2" font-size="5.3" fill="#111" stroke="#111" stroke-width="0.3" text-anchor="middle" font-weight="bold" >No</text>
<text x="191.4" y="387.2" font-size="5.3" fill="#111" stroke="#111" stroke-width="0.3" text-anchor="middle" font-weight="bold" >Depth</text>
<text x="191.4" y="393.05" font-size="5.3" fill="#111" stroke="#111" stroke-width="0.3" text-anchor="middle" font-weight="bold" >(m)</text>
<text x="221.9" y="387.2" font-size="5.3" fill="#111" stroke="#111" stroke-width="0.3" text-anchor="middle" font-weight="bold" >Unit</text>
<text x="221.9" y="393.05" font-size="5.3" fill="#111" stroke="#111" stroke-width="0.3" text-anchor="middle" font-weight="bold" >Weight</text>
<text x="221.9" y="398.9" font-size="5.3" fill="#111" stroke="#111" stroke-width="0.3" text-anchor="middle" font-weight="bold" >(kN/m³)</text>
<text x="252.39999999999998" y="387.2" font-size="5.3" fill="#111" stroke="#111" stroke-width="0.3" text-anchor="middle" font-weight="bold" >Fines (%)</text>
<text x="282.65" y="387.2" font-size="5.3" fill="#111" stroke="#111" stroke-width="0.3" text-anchor="middle" font-weight="bold" >Insitu</text>
<text x="282.65" y="393.05" font-size="5.3" fill="#111" stroke="#111" stroke-width="0.3" text-anchor="middle" font-weight="bold" >Pore</text>
<text x="282.65" y="398.9" font-size="5.3" fill="#111" stroke="#111" stroke-width="0.3" text-anchor="middle" font-weight="bold" >Pressure...</text>
<text x="313.15" y="387.2" font-size="5.3" fill="#111" stroke="#111" stroke-width="0.3" text-anchor="middle" font-weight="bold" >Total</text>
<text x="313.15" y="393.05" font-size="5.3" fill="#111" stroke="#111" stroke-width="0.3" text-anchor="middle" font-weight="bold" >Stress</text>
<text x="313.15" y="398.9" font-size="5.3" fill="#111" stroke="#111" stroke-width="0.3" text-anchor="middle" font-weight="bold" >(kPa)</text>
<text x="343.54999999999995" y="387.2" font-size="5.3" fill="#111" stroke="#111" stroke-width="0.3" text-anchor="middle" font-weight="bold" >Insitu Eff.</text>
<text x="343.54999999999995" y="393.05" font-size="5.3" fill="#111" stroke="#111" stroke-width="0.3" text-anchor="middle" font-weight="bold" >Stress</text>
<text x="343.54999999999995" y="398.9" font-size="5.3" fill="#111" stroke="#111" stroke-width="0.3" text-anchor="middle" font-weight="bold" >(kPa)</text>
<text x="373.85" y="387.2" font-size="5.3" fill="#111" stroke="#111" stroke-width="0.3" text-anchor="middle" font-weight="bold" >N SPT</text>
<text x="373.85" y="393.05" font-size="5.3" fill="#111" stroke="#111" stroke-width="0.3" text-anchor="middle" font-weight="bold" >(blows per</text>
<text x="373.85" y="398.9" font-size="5.3" fill="#111" stroke="#111" stroke-width="0.3" text-anchor="middle" font-weight="bold" >30 cm)</text>
<text x="399.45" y="387.2" font-size="5.3" fill="#111" stroke="#111" stroke-width="0.3" text-anchor="middle" font-weight="bold" >m</text>
<text x="419.65" y="387.2" font-size="5.3" fill="#111" stroke="#111" stroke-width="0.3" text-anchor="middle" font-weight="bold" >Cn</text>
<text x="438.95" y="387.2" font-size="5.3" fill="#111" stroke="#111" stroke-width="0.3" text-anchor="middle" font-weight="bold" >Cr</text>
<text x="457.65" y="387.2" font-size="5.3" fill="#111" stroke="#111" stroke-width="0.3" text-anchor="middle" font-weight="bold" >Cb</text>
<text x="477.4" y="387.2" font-size="5.3" fill="#111" stroke="#111" stroke-width="0.3" text-anchor="middle" font-weight="bold" >Cs</text>
<text x="500.1" y="387.2" font-size="5.3" fill="#111" stroke="#111" stroke-width="0.3" text-anchor="middle" font-weight="bold" >Ce</text>
<text x="527.6" y="387.2" font-size="5.3" fill="#111" stroke="#111" stroke-width="0.3" text-anchor="middle" font-weight="bold" >N1(60)</text>
<text x="558.1" y="387.2" font-size="5.3" fill="#111" stroke="#111" stroke-width="0.3" text-anchor="middle" font-weight="bold" >Δ(N1)60</text>
<text x="588.5" y="387.2" font-size="5.3" fill="#111" stroke="#111" stroke-width="0.3" text-anchor="middle" font-weight="bold" >N1(60)cs</text>
<text x="619.15" y="387.2" font-size="5.3" fill="#111" stroke="#111" stroke-width="0.3" text-anchor="middle" font-weight="bold" >Eq. Pore</text>
<text x="619.15" y="393.05" font-size="5.3" fill="#111" stroke="#111" stroke-width="0.3" text-anchor="middle" font-weight="bold" >Pressure</text>
<text x="619.15" y="398.9" font-size="5.3" fill="#111" stroke="#111" stroke-width="0.3" text-anchor="middle" font-weight="bold" >(kPa)</text>
<text x="649.65" y="387.2" font-size="5.3" fill="#111" stroke="#111" stroke-width="0.3" text-anchor="middle" font-weight="bold" >Eq. Eff.</text>
<text x="649.65" y="393.05" font-size="5.3" fill="#111" stroke="#111" stroke-width="0.3" text-anchor="middle" font-weight="bold" >Stress</text>
<text x="649.65" y="398.9" font-size="5.3" fill="#111" stroke="#111" stroke-width="0.3" text-anchor="middle" font-weight="bold" >(kPa)</text>
<text x="679.8499999999999" y="387.2" font-size="5.3" fill="#111" stroke="#111" stroke-width="0.3" text-anchor="middle" font-weight="bold" >rd</text>
<text x="710.05" y="387.2" font-size="5.3" fill="#111" stroke="#111" stroke-width="0.3" text-anchor="middle" font-weight="bold" >MSF max</text>
<text x="740.3" y="387.2" font-size="5.3" fill="#111" stroke="#111" stroke-width="0.3" text-anchor="middle" font-weight="bold" >MSF</text>
<text x="770.55" y="387.2" font-size="5.3" fill="#111" stroke="#111" stroke-width="0.3" text-anchor="middle" font-weight="bold" >CSR</text>
<text x="800.975" y="387.2" font-size="5.3" fill="#111" stroke="#111" stroke-width="0.3" text-anchor="middle" font-weight="bold" >Ksigma</text>
<text x="831.375" y="387.2" font-size="5.3" fill="#111" stroke="#111" stroke-width="0.3" text-anchor="middle" font-weight="bold" >CSR*</text>
<text x="861.65" y="387.2" font-size="5.3" fill="#111" stroke="#111" stroke-width="0.3" text-anchor="middle" font-weight="bold" >CRR 7.5</text>
<text x="891.95" y="387.2" font-size="5.3" fill="#111" stroke="#111" stroke-width="0.3" text-anchor="middle" font-weight="bold" >FS</text>
<text x="922.75" y="387.2" font-size="5.3" fill="#111" stroke="#111" stroke-width="0.3" text-anchor="middle" font-weight="bold" >LPI</text>
<text x="942.5" y="387.2" font-size="5.3" fill="#111" stroke="#111" stroke-width="0.3" text-anchor="middle" font-weight="bold" >γ</text>
<rect x="176.7" y="402.15" width="30.2" height="9.95" fill="#2d9ad8" />
<line x1="156.8" y1="412.4" x2="960" y2="412.4" stroke="#e4e4e4" stroke-width="0.7" />
<line x1="156.8" y1="422.65" x2="960" y2="422.65" stroke="#e4e4e4" stroke-width="0.7" />
<line x1="156.8" y1="432.9" x2="960" y2="432.9" stroke="#e4e4e4" stroke-width="0.7" />
<line x1="156.8" y1="443.15" x2="960" y2="443.15" stroke="#e4e4e4" stroke-width="0.7" />
<line x1="156.8" y1="453.4" x2="960" y2="453.4" stroke="#e4e4e4" stroke-width="0.7" />
<line x1="156.8" y1="463.65" x2="960" y2="463.65" stroke="#e4e4e4" stroke-width="0.7" />
<line x1="156.8" y1="473.9" x2="960" y2="473.9" stroke="#e4e4e4" stroke-width="0.7" />
<line x1="156.8" y1="484.15" x2="960" y2="484.15" stroke="#e4e4e4" stroke-width="0.7" />
<line x1="156.8" y1="494.4" x2="960" y2="494.4" stroke="#e4e4e4" stroke-width="0.7" />
<line x1="176.4" y1="380.2" x2="176.4" y2="494.4" stroke="#dedede" stroke-width="0.7" />
<line x1="206.4" y1="380.2" x2="206.4" y2="494.4" stroke="#dedede" stroke-width="0.7" />
<line x1="237.4" y1="380.2" x2="237.4" y2="494.4" stroke="#dedede" stroke-width="0.7" />
<line x1="267.4" y1="380.2" x2="267.4" y2="494.4" stroke="#dedede" stroke-width="0.7" />
<line x1="297.9" y1="380.2" x2="297.9" y2="494.4" stroke="#dedede" stroke-width="0.7" />
<line x1="328.4" y1="380.2" x2="328.4" y2="494.4" stroke="#dedede" stroke-width="0.7" />
<line x1="358.7" y1="380.2" x2="358.7" y2="494.4" stroke="#dedede" stroke-width="0.7" />
<line x1="389.0" y1="380.2" x2="389.0" y2="494.4" stroke="#dedede" stroke-width="0.7" />
<line x1="409.9" y1="380.2" x2="409.9" y2="494.4" stroke="#dedede" stroke-width="0.7" />
<line x1="429.4" y1="380.2" x2="429.4" y2="494.4" stroke="#dedede" stroke-width="0.7" />
<line x1="448.5" y1="380.2" x2="448.5" y2="494.4" stroke="#dedede" stroke-width="0.7" />
<line x1="466.8" y1="380.2" x2="466.8" y2="494.4" stroke="#dedede" stroke-width="0.7" />
<line x1="488.0" y1="380.2" x2="488.0" y2="494.4" stroke="#dedede" stroke-width="0.7" />
<line x1="512.2" y1="380.2" x2="512.2" y2="494.4" stroke="#dedede" stroke-width="0.7" />
<line x1="543.0" y1="380.2" x2="543.0" y2="494.4" stroke="#dedede" stroke-width="0.7" />
<line x1="573.2" y1="380.2" x2="573.2" y2="494.4" stroke="#dedede" stroke-width="0.7" />
<line x1="603.8" y1="380.2" x2="603.8" y2="494.4" stroke="#dedede" stroke-width="0.7" />
<line x1="634.5" y1="380.2" x2="634.5" y2="494.4" stroke="#dedede" stroke-width="0.7" />
<line x1="664.8" y1="380.2" x2="664.8" y2="494.4" stroke="#dedede" stroke-width="0.7" />
<line x1="694.9" y1="380.2" x2="694.9" y2="494.4" stroke="#dedede" stroke-width="0.7" />
<line x1="725.2" y1="380.2" x2="725.2" y2="494.4" stroke="#dedede" stroke-width="0.7" />
<line x1="755.4" y1="380.2" x2="755.4" y2="494.4" stroke="#dedede" stroke-width="0.7" />
<line x1="785.7" y1="380.2" x2="785.7" y2="494.4" stroke="#dedede" stroke-width="0.7" />
<line x1="816.25" y1="380.2" x2="816.25" y2="494.4" stroke="#dedede" stroke-width="0.7" />
<line x1="846.5" y1="380.2" x2="846.5" y2="494.4" stroke="#dedede" stroke-width="0.7" />
<line x1="876.8" y1="380.2" x2="876.8" y2="494.4" stroke="#dedede" stroke-width="0.7" />
<line x1="907.1" y1="380.2" x2="907.1" y2="494.4" stroke="#dedede" stroke-width="0.7" />
<line x1="938.4" y1="380.2" x2="938.4" y2="494.4" stroke="#dedede" stroke-width="0.7" />
<line x1="156.8" y1="402.15" x2="960" y2="402.15" stroke="#dcdcdc" stroke-width="0.7" />
<circle cx="160.9" cy="407.27" r="1.75" fill="#60b030"/>
<text transform="translate(165.4,409.52) scale(0.8,1)" font-size="6.7" fill="#111" stroke="#111" stroke-width="0.25" font-weight="bold">1</text>
<text transform="translate(204.80,409.52) scale(0.76,1)" font-size="6.7" fill="#ffffff" stroke="#ffffff" stroke-width="0.2" text-anchor="end">1.10</text>
<text transform="translate(235.80,409.52) scale(0.76,1)" font-size="6.7" fill="#333" stroke="#333" stroke-width="0.2" text-anchor="end">19.00</text>
<text transform="translate(265.80,409.52) scale(0.76,1)" font-size="6.7" fill="#333" stroke="#333" stroke-width="0.2" text-anchor="end">0.00</text>
<text transform="translate(296.30,409.52) scale(0.76,1)" font-size="6.7" fill="#333" stroke="#333" stroke-width="0.2" text-anchor="end">0.00</text>
<text transform="translate(326.80,409.52) scale(0.76,1)" font-size="6.7" fill="#333" stroke="#333" stroke-width="0.2" text-anchor="end">20.90</text>
<text transform="translate(357.10,409.52) scale(0.76,1)" font-size="6.7" fill="#333" stroke="#333" stroke-width="0.2" text-anchor="end">20.90</text>
<text transform="translate(387.40,409.52) scale(0.76,1)" font-size="6.7" fill="#333" stroke="#333" stroke-width="0.2" text-anchor="end">4</text>
<text transform="translate(408.30,409.52) scale(0.76,1)" font-size="6.7" fill="#333" stroke="#333" stroke-width="0.2" text-anchor="end">0.59</text>
<text transform="translate(427.80,409.52) scale(0.76,1)" font-size="6.7" fill="#333" stroke="#333" stroke-width="0.2" text-anchor="end">1.70</text>
<text transform="translate(446.90,409.52) scale(0.76,1)" font-size="6.7" fill="#333" stroke="#333" stroke-width="0.2" text-anchor="end">0.75</text>
<text transform="translate(465.20,409.52) scale(0.76,1)" font-size="6.7" fill="#333" stroke="#333" stroke-width="0.2" text-anchor="end">1.00</text>
<text transform="translate(486.40,409.52) scale(0.76,1)" font-size="6.7" fill="#333" stroke="#333" stroke-width="0.2" text-anchor="end">1.00</text>
<text transform="translate(510.60,409.52) scale(0.76,1)" font-size="6.7" fill="#333" stroke="#333" stroke-width="0.2" text-anchor="end">1.25</text>
<text transform="translate(541.40,409.52) scale(0.76,1)" font-size="6.7" fill="#333" stroke="#333" stroke-width="0.2" text-anchor="end">6.00</text>
<text transform="translate(571.60,409.52) scale(0.76,1)" font-size="6.7" fill="#333" stroke="#333" stroke-width="0.2" text-anchor="end">0.00</text>
<text transform="translate(602.20,409.52) scale(0.76,1)" font-size="6.7" fill="#333" stroke="#333" stroke-width="0.2" text-anchor="end">6</text>
<text transform="translate(632.90,409.52) scale(0.76,1)" font-size="6.7" fill="#333" stroke="#333" stroke-width="0.2" text-anchor="end">0.00</text>
<text transform="translate(663.20,409.52) scale(0.76,1)" font-size="6.7" fill="#333" stroke="#333" stroke-width="0.2" text-anchor="end">20.90</text>
<text transform="translate(693.30,409.52) scale(0.76,1)" font-size="6.7" fill="#333" stroke="#333" stroke-width="0.2" text-anchor="end">1.00</text>
<text transform="translate(723.60,409.52) scale(0.76,1)" font-size="6.7" fill="#333" stroke="#333" stroke-width="0.2" text-anchor="end">1.126</text>
<text transform="translate(753.80,409.52) scale(0.76,1)" font-size="6.7" fill="#333" stroke="#333" stroke-width="0.2" text-anchor="end">1.03</text>
<text transform="translate(784.10,409.52) scale(0.76,1)" font-size="6.7" fill="#333" stroke="#333" stroke-width="0.2" text-anchor="end">0.181</text>
<text transform="translate(814.65,409.52) scale(0.76,1)" font-size="6.7" fill="#333" stroke="#333" stroke-width="0.2" text-anchor="end">1.100</text>
<text transform="translate(844.90,409.52) scale(0.76,1)" font-size="6.7" fill="#333" stroke="#333" stroke-width="0.2" text-anchor="end">0.160</text>
<text transform="translate(875.20,409.52) scale(0.76,1)" font-size="6.7" fill="#333" stroke="#333" stroke-width="0.2" text-anchor="end">4.000</text>
<text transform="translate(905.50,409.52) scale(0.76,1)" font-size="6.7" fill="#333" stroke="#333" stroke-width="0.2" text-anchor="end">2.00</text>
<text transform="translate(936.80,409.52) scale(0.76,1)" font-size="6.7" fill="#333" stroke="#333" stroke-width="0.2" text-anchor="end">0.00</text>
<circle cx="160.9" cy="417.52" r="1.75" fill="#e8603c"/>
<text transform="translate(165.4,419.77) scale(0.8,1)" font-size="6.7" fill="#111" stroke="#111" stroke-width="0.25" font-weight="bold">2</text>
<text transform="translate(204.80,419.77) scale(0.76,1)" font-size="6.7" fill="#333" stroke="#333" stroke-width="0.2" text-anchor="end">1.80</text>
<text transform="translate(235.80,419.77) scale(0.76,1)" font-size="6.7" fill="#333" stroke="#333" stroke-width="0.2" text-anchor="end">20.00</text>
<text transform="translate(265.80,419.77) scale(0.76,1)" font-size="6.7" fill="#333" stroke="#333" stroke-width="0.2" text-anchor="end">2.00</text>
<text transform="translate(296.30,419.77) scale(0.76,1)" font-size="6.7" fill="#333" stroke="#333" stroke-width="0.2" text-anchor="end">0.00</text>
<text transform="translate(326.80,419.77) scale(0.76,1)" font-size="6.7" fill="#333" stroke="#333" stroke-width="0.2" text-anchor="end">34.90</text>
<text transform="translate(357.10,419.77) scale(0.76,1)" font-size="6.7" fill="#333" stroke="#333" stroke-width="0.2" text-anchor="end">34.90</text>
<text transform="translate(387.40,419.77) scale(0.76,1)" font-size="6.7" fill="#333" stroke="#333" stroke-width="0.2" text-anchor="end">5</text>
<text transform="translate(408.30,419.77) scale(0.76,1)" font-size="6.7" fill="#333" stroke="#333" stroke-width="0.2" text-anchor="end">0.57</text>
<text transform="translate(427.80,419.77) scale(0.76,1)" font-size="6.7" fill="#333" stroke="#333" stroke-width="0.2" text-anchor="end">1.70</text>
<text transform="translate(446.90,419.77) scale(0.76,1)" font-size="6.7" fill="#333" stroke="#333" stroke-width="0.2" text-anchor="end">0.75</text>
<text transform="translate(465.20,419.77) scale(0.76,1)" font-size="6.7" fill="#333" stroke="#333" stroke-width="0.2" text-anchor="end">1.00</text>
<text transform="translate(486.40,419.77) scale(0.76,1)" font-size="6.7" fill="#333" stroke="#333" stroke-width="0.2" text-anchor="end">1.00</text>
<text transform="translate(510.60,419.77) scale(0.76,1)" font-size="6.7" fill="#333" stroke="#333" stroke-width="0.2" text-anchor="end">1.25</text>
<text transform="translate(541.40,419.77) scale(0.76,1)" font-size="6.7" fill="#333" stroke="#333" stroke-width="0.2" text-anchor="end">8.00</text>
<text transform="translate(571.60,419.77) scale(0.76,1)" font-size="6.7" fill="#333" stroke="#333" stroke-width="0.2" text-anchor="end">0.00</text>
<text transform="translate(602.20,419.77) scale(0.76,1)" font-size="6.7" fill="#333" stroke="#333" stroke-width="0.2" text-anchor="end">8</text>
<text transform="translate(632.90,419.77) scale(0.76,1)" font-size="6.7" fill="#333" stroke="#333" stroke-width="0.2" text-anchor="end">0.00</text>
<text transform="translate(663.20,419.77) scale(0.76,1)" font-size="6.7" fill="#333" stroke="#333" stroke-width="0.2" text-anchor="end">34.90</text>
<text transform="translate(693.30,419.77) scale(0.76,1)" font-size="6.7" fill="#333" stroke="#333" stroke-width="0.2" text-anchor="end">0.99</text>
<text transform="translate(723.60,419.77) scale(0.76,1)" font-size="6.7" fill="#333" stroke="#333" stroke-width="0.2" text-anchor="end">1.154</text>
<text transform="translate(753.80,419.77) scale(0.76,1)" font-size="6.7" fill="#333" stroke="#333" stroke-width="0.2" text-anchor="end">1.03</text>
<text transform="translate(784.10,419.77) scale(0.76,1)" font-size="6.7" fill="#333" stroke="#333" stroke-width="0.2" text-anchor="end">0.180</text>
<text transform="translate(814.65,419.77) scale(0.76,1)" font-size="6.7" fill="#333" stroke="#333" stroke-width="0.2" text-anchor="end">1.091</text>
<text transform="translate(844.90,419.77) scale(0.76,1)" font-size="6.7" fill="#333" stroke="#333" stroke-width="0.2" text-anchor="end">0.160</text>
<text transform="translate(875.20,419.77) scale(0.76,1)" font-size="6.7" fill="#333" stroke="#333" stroke-width="0.2" text-anchor="end">0.105</text>
<text transform="translate(905.50,419.77) scale(0.76,1)" font-size="6.7" fill="#333" stroke="#333" stroke-width="0.2" text-anchor="end">0.66</text>
<text transform="translate(936.80,419.77) scale(0.76,1)" font-size="6.7" fill="#333" stroke="#333" stroke-width="0.2" text-anchor="end">2.19</text>
<circle cx="160.9" cy="427.77" r="1.75" fill="#e8603c"/>
<text transform="translate(165.4,430.02) scale(0.8,1)" font-size="6.7" fill="#111" stroke="#111" stroke-width="0.25" font-weight="bold">3</text>
<text transform="translate(204.80,430.02) scale(0.76,1)" font-size="6.7" fill="#333" stroke="#333" stroke-width="0.2" text-anchor="end">2.60</text>
<text transform="translate(235.80,430.02) scale(0.76,1)" font-size="6.7" fill="#333" stroke="#333" stroke-width="0.2" text-anchor="end">20.00</text>
<text transform="translate(265.80,430.02) scale(0.76,1)" font-size="6.7" fill="#333" stroke="#333" stroke-width="0.2" text-anchor="end">2.00</text>
<text transform="translate(296.30,430.02) scale(0.76,1)" font-size="6.7" fill="#333" stroke="#333" stroke-width="0.2" text-anchor="end">7.85</text>
<text transform="translate(326.80,430.02) scale(0.76,1)" font-size="6.7" fill="#333" stroke="#333" stroke-width="0.2" text-anchor="end">50.90</text>
<text transform="translate(357.10,430.02) scale(0.76,1)" font-size="6.7" fill="#333" stroke="#333" stroke-width="0.2" text-anchor="end">43.05</text>
<text transform="translate(387.40,430.02) scale(0.76,1)" font-size="6.7" fill="#333" stroke="#333" stroke-width="0.2" text-anchor="end">4</text>
<text transform="translate(408.30,430.02) scale(0.76,1)" font-size="6.7" fill="#333" stroke="#333" stroke-width="0.2" text-anchor="end">0.59</text>
<text transform="translate(427.80,430.02) scale(0.76,1)" font-size="6.7" fill="#333" stroke="#333" stroke-width="0.2" text-anchor="end">1.66</text>
<text transform="translate(446.90,430.02) scale(0.76,1)" font-size="6.7" fill="#333" stroke="#333" stroke-width="0.2" text-anchor="end">0.75</text>
<text transform="translate(465.20,430.02) scale(0.76,1)" font-size="6.7" fill="#333" stroke="#333" stroke-width="0.2" text-anchor="end">1.00</text>
<text transform="translate(486.40,430.02) scale(0.76,1)" font-size="6.7" fill="#333" stroke="#333" stroke-width="0.2" text-anchor="end">1.00</text>
<text transform="translate(510.60,430.02) scale(0.76,1)" font-size="6.7" fill="#333" stroke="#333" stroke-width="0.2" text-anchor="end">1.25</text>
<text transform="translate(541.40,430.02) scale(0.76,1)" font-size="6.7" fill="#333" stroke="#333" stroke-width="0.2" text-anchor="end">6.00</text>
<text transform="translate(571.60,430.02) scale(0.76,1)" font-size="6.7" fill="#333" stroke="#333" stroke-width="0.2" text-anchor="end">0.00</text>
<text transform="translate(602.20,430.02) scale(0.76,1)" font-size="6.7" fill="#333" stroke="#333" stroke-width="0.2" text-anchor="end">6</text>
<text transform="translate(632.90,430.02) scale(0.76,1)" font-size="6.7" fill="#333" stroke="#333" stroke-width="0.2" text-anchor="end">7.85</text>
<text transform="translate(663.20,430.02) scale(0.76,1)" font-size="6.7" fill="#333" stroke="#333" stroke-width="0.2" text-anchor="end">43.05</text>
<text transform="translate(693.30,430.02) scale(0.76,1)" font-size="6.7" fill="#333" stroke="#333" stroke-width="0.2" text-anchor="end">0.98</text>
<text transform="translate(723.60,430.02) scale(0.76,1)" font-size="6.7" fill="#333" stroke="#333" stroke-width="0.2" text-anchor="end">1.126</text>
<text transform="translate(753.80,430.02) scale(0.76,1)" font-size="6.7" fill="#333" stroke="#333" stroke-width="0.2" text-anchor="end">1.03</text>
<text transform="translate(784.10,430.02) scale(0.76,1)" font-size="6.7" fill="#333" stroke="#333" stroke-width="0.2" text-anchor="end">0.210</text>
<text transform="translate(814.65,430.02) scale(0.76,1)" font-size="6.7" fill="#333" stroke="#333" stroke-width="0.2" text-anchor="end">1.068</text>
<text transform="translate(844.90,430.02) scale(0.76,1)" font-size="6.7" fill="#333" stroke="#333" stroke-width="0.2" text-anchor="end">0.192</text>
<text transform="translate(875.20,430.02) scale(0.76,1)" font-size="6.7" fill="#333" stroke="#333" stroke-width="0.2" text-anchor="end">0.092</text>
<text transform="translate(905.50,430.02) scale(0.76,1)" font-size="6.7" fill="#333" stroke="#333" stroke-width="0.2" text-anchor="end">0.48</text>
<text transform="translate(936.80,430.02) scale(0.76,1)" font-size="6.7" fill="#333" stroke="#333" stroke-width="0.2" text-anchor="end">3.62</text>
<circle cx="160.9" cy="438.02" r="1.75" fill="#e8603c"/>
<text transform="translate(165.4,440.27) scale(0.8,1)" font-size="6.7" fill="#111" stroke="#111" stroke-width="0.25" font-weight="bold">4</text>
<text transform="translate(204.80,440.27) scale(0.76,1)" font-size="6.7" fill="#333" stroke="#333" stroke-width="0.2" text-anchor="end">3.40</text>
<text transform="translate(235.80,440.27) scale(0.76,1)" font-size="6.7" fill="#333" stroke="#333" stroke-width="0.2" text-anchor="end">20.00</text>
<text transform="translate(265.80,440.27) scale(0.76,1)" font-size="6.7" fill="#333" stroke="#333" stroke-width="0.2" text-anchor="end">1.00</text>
<text transform="translate(296.30,440.27) scale(0.76,1)" font-size="6.7" fill="#333" stroke="#333" stroke-width="0.2" text-anchor="end">15.70</text>
<text transform="translate(326.80,440.27) scale(0.76,1)" font-size="6.7" fill="#333" stroke="#333" stroke-width="0.2" text-anchor="end">66.90</text>
<text transform="translate(357.10,440.27) scale(0.76,1)" font-size="6.7" fill="#333" stroke="#333" stroke-width="0.2" text-anchor="end">51.20</text>
<text transform="translate(387.40,440.27) scale(0.76,1)" font-size="6.7" fill="#333" stroke="#333" stroke-width="0.2" text-anchor="end">6</text>
<text transform="translate(408.30,440.27) scale(0.76,1)" font-size="6.7" fill="#333" stroke="#333" stroke-width="0.2" text-anchor="end">0.56</text>
<text transform="translate(427.80,440.27) scale(0.76,1)" font-size="6.7" fill="#333" stroke="#333" stroke-width="0.2" text-anchor="end">1.46</text>
<text transform="translate(446.90,440.27) scale(0.76,1)" font-size="6.7" fill="#333" stroke="#333" stroke-width="0.2" text-anchor="end">0.80</text>
<text transform="translate(465.20,440.27) scale(0.76,1)" font-size="6.7" fill="#333" stroke="#333" stroke-width="0.2" text-anchor="end">1.00</text>
<text transform="translate(486.40,440.27) scale(0.76,1)" font-size="6.7" fill="#333" stroke="#333" stroke-width="0.2" text-anchor="end">1.00</text>
<text transform="translate(510.60,440.27) scale(0.76,1)" font-size="6.7" fill="#333" stroke="#333" stroke-width="0.2" text-anchor="end">1.25</text>
<text transform="translate(541.40,440.27) scale(0.76,1)" font-size="6.7" fill="#333" stroke="#333" stroke-width="0.2" text-anchor="end">9.00</text>
<text transform="translate(571.60,440.27) scale(0.76,1)" font-size="6.7" fill="#333" stroke="#333" stroke-width="0.2" text-anchor="end">0.00</text>
<text transform="translate(602.20,440.27) scale(0.76,1)" font-size="6.7" fill="#333" stroke="#333" stroke-width="0.2" text-anchor="end">9</text>
<text transform="translate(632.90,440.27) scale(0.76,1)" font-size="6.7" fill="#333" stroke="#333" stroke-width="0.2" text-anchor="end">15.70</text>
<text transform="translate(663.20,440.27) scale(0.76,1)" font-size="6.7" fill="#333" stroke="#333" stroke-width="0.2" text-anchor="end">51.20</text>
<text transform="translate(693.30,440.27) scale(0.76,1)" font-size="6.7" fill="#333" stroke="#333" stroke-width="0.2" text-anchor="end">0.97</text>
<text transform="translate(723.60,440.27) scale(0.76,1)" font-size="6.7" fill="#333" stroke="#333" stroke-width="0.2" text-anchor="end">1.172</text>
<text transform="translate(753.80,440.27) scale(0.76,1)" font-size="6.7" fill="#333" stroke="#333" stroke-width="0.2" text-anchor="end">1.04</text>
<text transform="translate(784.10,440.27) scale(0.76,1)" font-size="6.7" fill="#333" stroke="#333" stroke-width="0.2" text-anchor="end">0.230</text>
<text transform="translate(814.65,440.27) scale(0.76,1)" font-size="6.7" fill="#333" stroke="#333" stroke-width="0.2" text-anchor="end">1.061</text>
<text transform="translate(844.90,440.27) scale(0.76,1)" font-size="6.7" fill="#333" stroke="#333" stroke-width="0.2" text-anchor="end">0.209</text>
<text transform="translate(875.20,440.27) scale(0.76,1)" font-size="6.7" fill="#333" stroke="#333" stroke-width="0.2" text-anchor="end">0.111</text>
<text transform="translate(905.50,440.27) scale(0.76,1)" font-size="6.7" fill="#333" stroke="#333" stroke-width="0.2" text-anchor="end">0.53</text>
<text transform="translate(936.80,440.27) scale(0.76,1)" font-size="6.7" fill="#333" stroke="#333" stroke-width="0.2" text-anchor="end">3.11</text>
<circle cx="160.9" cy="448.27" r="1.75" fill="#e8603c"/>
<text transform="translate(165.4,450.52) scale(0.8,1)" font-size="6.7" fill="#111" stroke="#111" stroke-width="0.25" font-weight="bold">5</text>
<text transform="translate(204.80,450.52) scale(0.76,1)" font-size="6.7" fill="#333" stroke="#333" stroke-width="0.2" text-anchor="end">4.10</text>
<text transform="translate(235.80,450.52) scale(0.76,1)" font-size="6.7" fill="#333" stroke="#333" stroke-width="0.2" text-anchor="end">20.00</text>
<text transform="translate(265.80,450.52) scale(0.76,1)" font-size="6.7" fill="#333" stroke="#333" stroke-width="0.2" text-anchor="end">1.00</text>
<text transform="translate(296.30,450.52) scale(0.76,1)" font-size="6.7" fill="#333" stroke="#333" stroke-width="0.2" text-anchor="end">22.56</text>
<text transform="translate(326.80,450.52) scale(0.76,1)" font-size="6.7" fill="#333" stroke="#333" stroke-width="0.2" text-anchor="end">80.90</text>
<text transform="translate(357.10,450.52) scale(0.76,1)" font-size="6.7" fill="#333" stroke="#333" stroke-width="0.2" text-anchor="end">58.34</text>
<text transform="translate(387.40,450.52) scale(0.76,1)" font-size="6.7" fill="#333" stroke="#333" stroke-width="0.2" text-anchor="end">8</text>
<text transform="translate(408.30,450.52) scale(0.76,1)" font-size="6.7" fill="#333" stroke="#333" stroke-width="0.2" text-anchor="end">0.53</text>
<text transform="translate(427.80,450.52) scale(0.76,1)" font-size="6.7" fill="#333" stroke="#333" stroke-width="0.2" text-anchor="end">1.33</text>
<text transform="translate(446.90,450.52) scale(0.76,1)" font-size="6.7" fill="#333" stroke="#333" stroke-width="0.2" text-anchor="end">0.85</text>
<text transform="translate(465.20,450.52) scale(0.76,1)" font-size="6.7" fill="#333" stroke="#333" stroke-width="0.2" text-anchor="end">1.00</text>
<text transform="translate(486.40,450.52) scale(0.76,1)" font-size="6.7" fill="#333" stroke="#333" stroke-width="0.2" text-anchor="end">1.00</text>
<text transform="translate(510.60,450.52) scale(0.76,1)" font-size="6.7" fill="#333" stroke="#333" stroke-width="0.2" text-anchor="end">1.25</text>
<text transform="translate(541.40,450.52) scale(0.76,1)" font-size="6.7" fill="#333" stroke="#333" stroke-width="0.2" text-anchor="end">11.00</text>
<text transform="translate(571.60,450.52) scale(0.76,1)" font-size="6.7" fill="#333" stroke="#333" stroke-width="0.2" text-anchor="end">0.00</text>
<text transform="translate(602.20,450.52) scale(0.76,1)" font-size="6.7" fill="#333" stroke="#333" stroke-width="0.2" text-anchor="end">11</text>
<text transform="translate(632.90,450.52) scale(0.76,1)" font-size="6.7" fill="#333" stroke="#333" stroke-width="0.2" text-anchor="end">22.56</text>
<text transform="translate(663.20,450.52) scale(0.76,1)" font-size="6.7" fill="#333" stroke="#333" stroke-width="0.2" text-anchor="end">58.34</text>
<text transform="translate(693.30,450.52) scale(0.76,1)" font-size="6.7" fill="#333" stroke="#333" stroke-width="0.2" text-anchor="end">0.96</text>
<text transform="translate(723.60,450.52) scale(0.76,1)" font-size="6.7" fill="#333" stroke="#333" stroke-width="0.2" text-anchor="end">1.212</text>
<text transform="translate(753.80,450.52) scale(0.76,1)" font-size="6.7" fill="#333" stroke="#333" stroke-width="0.2" text-anchor="end">1.05</text>
<text transform="translate(784.10,450.52) scale(0.76,1)" font-size="6.7" fill="#333" stroke="#333" stroke-width="0.2" text-anchor="end">0.242</text>
<text transform="translate(814.65,450.52) scale(0.76,1)" font-size="6.7" fill="#333" stroke="#333" stroke-width="0.2" text-anchor="end">1.053</text>
<text transform="translate(844.90,450.52) scale(0.76,1)" font-size="6.7" fill="#333" stroke="#333" stroke-width="0.2" text-anchor="end">0.220</text>
<text transform="translate(875.20,450.52) scale(0.76,1)" font-size="6.7" fill="#333" stroke="#333" stroke-width="0.2" text-anchor="end">0.125</text>
<text transform="translate(905.50,450.52) scale(0.76,1)" font-size="6.7" fill="#333" stroke="#333" stroke-width="0.2" text-anchor="end">0.57</text>
<text transform="translate(936.80,450.52) scale(0.76,1)" font-size="6.7" fill="#333" stroke="#333" stroke-width="0.2" text-anchor="end">2.39</text>
<circle cx="160.9" cy="458.52" r="1.75" fill="#e8603c"/>
<text transform="translate(165.4,460.77) scale(0.8,1)" font-size="6.7" fill="#111" stroke="#111" stroke-width="0.25" font-weight="bold">6</text>
<text transform="translate(204.80,460.77) scale(0.76,1)" font-size="6.7" fill="#333" stroke="#333" stroke-width="0.2" text-anchor="end">4.90</text>
<text transform="translate(235.80,460.77) scale(0.76,1)" font-size="6.7" fill="#333" stroke="#333" stroke-width="0.2" text-anchor="end">20.00</text>
<text transform="translate(265.80,460.77) scale(0.76,1)" font-size="6.7" fill="#333" stroke="#333" stroke-width="0.2" text-anchor="end">1.00</text>
<text transform="translate(296.30,460.77) scale(0.76,1)" font-size="6.7" fill="#333" stroke="#333" stroke-width="0.2" text-anchor="end">30.41</text>
<text transform="translate(326.80,460.77) scale(0.76,1)" font-size="6.7" fill="#333" stroke="#333" stroke-width="0.2" text-anchor="end">96.90</text>
<text transform="translate(357.10,460.77) scale(0.76,1)" font-size="6.7" fill="#333" stroke="#333" stroke-width="0.2" text-anchor="end">66.49</text>
<text transform="translate(387.40,460.77) scale(0.76,1)" font-size="6.7" fill="#333" stroke="#333" stroke-width="0.2" text-anchor="end">9</text>
<text transform="translate(408.30,460.77) scale(0.76,1)" font-size="6.7" fill="#333" stroke="#333" stroke-width="0.2" text-anchor="end">0.52</text>
<text transform="translate(427.80,460.77) scale(0.76,1)" font-size="6.7" fill="#333" stroke="#333" stroke-width="0.2" text-anchor="end">1.24</text>
<text transform="translate(446.90,460.77) scale(0.76,1)" font-size="6.7" fill="#333" stroke="#333" stroke-width="0.2" text-anchor="end">0.85</text>
<text transform="translate(465.20,460.77) scale(0.76,1)" font-size="6.7" fill="#333" stroke="#333" stroke-width="0.2" text-anchor="end">1.00</text>
<text transform="translate(486.40,460.77) scale(0.76,1)" font-size="6.7" fill="#333" stroke="#333" stroke-width="0.2" text-anchor="end">1.00</text>
<text transform="translate(510.60,460.77) scale(0.76,1)" font-size="6.7" fill="#333" stroke="#333" stroke-width="0.2" text-anchor="end">1.25</text>
<text transform="translate(541.40,460.77) scale(0.76,1)" font-size="6.7" fill="#333" stroke="#333" stroke-width="0.2" text-anchor="end">12.00</text>
<text transform="translate(571.60,460.77) scale(0.76,1)" font-size="6.7" fill="#333" stroke="#333" stroke-width="0.2" text-anchor="end">0.00</text>
<text transform="translate(602.20,460.77) scale(0.76,1)" font-size="6.7" fill="#333" stroke="#333" stroke-width="0.2" text-anchor="end">12</text>
<text transform="translate(632.90,460.77) scale(0.76,1)" font-size="6.7" fill="#333" stroke="#333" stroke-width="0.2" text-anchor="end">30.41</text>
<text transform="translate(663.20,460.77) scale(0.76,1)" font-size="6.7" fill="#333" stroke="#333" stroke-width="0.2" text-anchor="end">66.49</text>
<text transform="translate(693.30,460.77) scale(0.76,1)" font-size="6.7" fill="#333" stroke="#333" stroke-width="0.2" text-anchor="end">0.95</text>
<text transform="translate(723.60,460.77) scale(0.76,1)" font-size="6.7" fill="#333" stroke="#333" stroke-width="0.2" text-anchor="end">1.235</text>
<text transform="translate(753.80,460.77) scale(0.76,1)" font-size="6.7" fill="#333" stroke="#333" stroke-width="0.2" text-anchor="end">1.05</text>
<text transform="translate(784.10,460.77) scale(0.76,1)" font-size="6.7" fill="#333" stroke="#333" stroke-width="0.2" text-anchor="end">0.251</text>
<text transform="translate(814.65,460.77) scale(0.76,1)" font-size="6.7" fill="#333" stroke="#333" stroke-width="0.2" text-anchor="end">1.042</text>
<text transform="translate(844.90,460.77) scale(0.76,1)" font-size="6.7" fill="#333" stroke="#333" stroke-width="0.2" text-anchor="end">0.229</text>
<text transform="translate(875.20,460.77) scale(0.76,1)" font-size="6.7" fill="#333" stroke="#333" stroke-width="0.2" text-anchor="end">0.132</text>
<text transform="translate(905.50,460.77) scale(0.76,1)" font-size="6.7" fill="#333" stroke="#333" stroke-width="0.2" text-anchor="end">0.58</text>
<text transform="translate(936.80,460.77) scale(0.76,1)" font-size="6.7" fill="#333" stroke="#333" stroke-width="0.2" text-anchor="end">2.55</text>
<circle cx="160.9" cy="468.77" r="1.75" fill="#3aa0e0"/>
<text transform="translate(165.4,471.02) scale(0.8,1)" font-size="6.7" fill="#111" stroke="#111" stroke-width="0.25" font-weight="bold">7</text>
<text transform="translate(204.80,471.02) scale(0.76,1)" font-size="6.7" fill="#333" stroke="#333" stroke-width="0.2" text-anchor="end">5.60</text>
<text transform="translate(235.80,471.02) scale(0.76,1)" font-size="6.7" fill="#333" stroke="#333" stroke-width="0.2" text-anchor="end">20.00</text>
<text transform="translate(265.80,471.02) scale(0.76,1)" font-size="6.7" fill="#333" stroke="#333" stroke-width="0.2" text-anchor="end">1.00</text>
<text transform="translate(296.30,471.02) scale(0.76,1)" font-size="6.7" fill="#333" stroke="#333" stroke-width="0.2" text-anchor="end">37.28</text>
<text transform="translate(326.80,471.02) scale(0.76,1)" font-size="6.7" fill="#333" stroke="#333" stroke-width="0.2" text-anchor="end">110.90</text>
<text transform="translate(357.10,471.02) scale(0.76,1)" font-size="6.7" fill="#333" stroke="#333" stroke-width="0.2" text-anchor="end">73.62</text>
<text transform="translate(387.40,471.02) scale(0.76,1)" font-size="6.7" fill="#333" stroke="#333" stroke-width="0.2" text-anchor="end">21</text>
<text transform="translate(408.30,471.02) scale(0.76,1)" font-size="6.7" fill="#333" stroke="#333" stroke-width="0.2" text-anchor="end">0.40</text>
<text transform="translate(427.80,471.02) scale(0.76,1)" font-size="6.7" fill="#333" stroke="#333" stroke-width="0.2" text-anchor="end">1.13</text>
<text transform="translate(446.90,471.02) scale(0.76,1)" font-size="6.7" fill="#333" stroke="#333" stroke-width="0.2" text-anchor="end">0.85</text>
<text transform="translate(465.20,471.02) scale(0.76,1)" font-size="6.7" fill="#333" stroke="#333" stroke-width="0.2" text-anchor="end">1.00</text>
<text transform="translate(486.40,471.02) scale(0.76,1)" font-size="6.7" fill="#333" stroke="#333" stroke-width="0.2" text-anchor="end">1.00</text>
<text transform="translate(510.60,471.02) scale(0.76,1)" font-size="6.7" fill="#333" stroke="#333" stroke-width="0.2" text-anchor="end">1.25</text>
<text transform="translate(541.40,471.02) scale(0.76,1)" font-size="6.7" fill="#333" stroke="#333" stroke-width="0.2" text-anchor="end">25.00</text>
<text transform="translate(571.60,471.02) scale(0.76,1)" font-size="6.7" fill="#333" stroke="#333" stroke-width="0.2" text-anchor="end">0.00</text>
<text transform="translate(602.20,471.02) scale(0.76,1)" font-size="6.7" fill="#333" stroke="#333" stroke-width="0.2" text-anchor="end">25</text>
<text transform="translate(632.90,471.02) scale(0.76,1)" font-size="6.7" fill="#333" stroke="#333" stroke-width="0.2" text-anchor="end">37.28</text>
<text transform="translate(663.20,471.02) scale(0.76,1)" font-size="6.7" fill="#333" stroke="#333" stroke-width="0.2" text-anchor="end">73.62</text>
<text transform="translate(693.30,471.02) scale(0.76,1)" font-size="6.7" fill="#333" stroke="#333" stroke-width="0.2" text-anchor="end">0.93</text>
<text transform="translate(723.60,471.02) scale(0.76,1)" font-size="6.7" fill="#333" stroke="#333" stroke-width="0.2" text-anchor="end">1.720</text>
<text transform="translate(753.80,471.02) scale(0.76,1)" font-size="6.7" fill="#333" stroke="#333" stroke-width="0.2" text-anchor="end">1.15</text>
<text transform="translate(784.10,471.02) scale(0.76,1)" font-size="6.7" fill="#333" stroke="#333" stroke-width="0.2" text-anchor="end">0.256</text>
<text transform="translate(814.65,471.02) scale(0.76,1)" font-size="6.7" fill="#333" stroke="#333" stroke-width="0.2" text-anchor="end">1.052</text>
<text transform="translate(844.90,471.02) scale(0.76,1)" font-size="6.7" fill="#333" stroke="#333" stroke-width="0.2" text-anchor="end">0.211</text>
<text transform="translate(875.20,471.02) scale(0.76,1)" font-size="6.7" fill="#333" stroke="#333" stroke-width="0.2" text-anchor="end">0.290</text>
<text transform="translate(905.50,471.02) scale(0.76,1)" font-size="6.7" fill="#333" stroke="#333" stroke-width="0.2" text-anchor="end">1.38</text>
<text transform="translate(936.80,471.02) scale(0.76,1)" font-size="6.7" fill="#333" stroke="#333" stroke-width="0.2" text-anchor="end">0.00</text>
<circle cx="160.9" cy="479.02" r="1.75" fill="#3aa0e0"/>
<text transform="translate(165.4,481.27) scale(0.8,1)" font-size="6.7" fill="#111" stroke="#111" stroke-width="0.25" font-weight="bold">8</text>
<text transform="translate(204.80,481.27) scale(0.76,1)" font-size="6.7" fill="#333" stroke="#333" stroke-width="0.2" text-anchor="end">6.40</text>
<text transform="translate(235.80,481.27) scale(0.76,1)" font-size="6.7" fill="#333" stroke="#333" stroke-width="0.2" text-anchor="end">20.00</text>
<text transform="translate(265.80,481.27) scale(0.76,1)" font-size="6.7" fill="#333" stroke="#333" stroke-width="0.2" text-anchor="end">1.00</text>
<text transform="translate(296.30,481.27) scale(0.76,1)" font-size="6.7" fill="#333" stroke="#333" stroke-width="0.2" text-anchor="end">45.13</text>
<text transform="translate(326.80,481.27) scale(0.76,1)" font-size="6.7" fill="#333" stroke="#333" stroke-width="0.2" text-anchor="end">126.90</text>
<text transform="translate(357.10,481.27) scale(0.76,1)" font-size="6.7" fill="#333" stroke="#333" stroke-width="0.2" text-anchor="end">81.77</text>
<text transform="translate(387.40,481.27) scale(0.76,1)" font-size="6.7" fill="#333" stroke="#333" stroke-width="0.2" text-anchor="end">18</text>
<text transform="translate(408.30,481.27) scale(0.76,1)" font-size="6.7" fill="#333" stroke="#333" stroke-width="0.2" text-anchor="end">0.41</text>
<text transform="translate(427.80,481.27) scale(0.76,1)" font-size="6.7" fill="#333" stroke="#333" stroke-width="0.2" text-anchor="end">1.09</text>
<text transform="translate(446.90,481.27) scale(0.76,1)" font-size="6.7" fill="#333" stroke="#333" stroke-width="0.2" text-anchor="end">0.95</text>
<text transform="translate(465.20,481.27) scale(0.76,1)" font-size="6.7" fill="#333" stroke="#333" stroke-width="0.2" text-anchor="end">1.00</text>
<text transform="translate(486.40,481.27) scale(0.76,1)" font-size="6.7" fill="#333" stroke="#333" stroke-width="0.2" text-anchor="end">1.00</text>
<text transform="translate(510.60,481.27) scale(0.76,1)" font-size="6.7" fill="#333" stroke="#333" stroke-width="0.2" text-anchor="end">1.25</text>
<text transform="translate(541.40,481.27) scale(0.76,1)" font-size="6.7" fill="#333" stroke="#333" stroke-width="0.2" text-anchor="end">23.00</text>
<text transform="translate(571.60,481.27) scale(0.76,1)" font-size="6.7" fill="#333" stroke="#333" stroke-width="0.2" text-anchor="end">0.00</text>
<text transform="translate(602.20,481.27) scale(0.76,1)" font-size="6.7" fill="#333" stroke="#333" stroke-width="0.2" text-anchor="end">23</text>
<text transform="translate(632.90,481.27) scale(0.76,1)" font-size="6.7" fill="#333" stroke="#333" stroke-width="0.2" text-anchor="end">45.13</text>
<text transform="translate(663.20,481.27) scale(0.76,1)" font-size="6.7" fill="#333" stroke="#333" stroke-width="0.2" text-anchor="end">81.77</text>
<text transform="translate(693.30,481.27) scale(0.76,1)" font-size="6.7" fill="#333" stroke="#333" stroke-width="0.2" text-anchor="end">0.92</text>
<text transform="translate(723.60,481.27) scale(0.76,1)" font-size="6.7" fill="#333" stroke="#333" stroke-width="0.2" text-anchor="end">1.623</text>
<text transform="translate(753.80,481.27) scale(0.76,1)" font-size="6.7" fill="#333" stroke="#333" stroke-width="0.2" text-anchor="end">1.13</text>
<text transform="translate(784.10,481.27) scale(0.76,1)" font-size="6.7" fill="#333" stroke="#333" stroke-width="0.2" text-anchor="end">0.260</text>
<text transform="translate(814.65,481.27) scale(0.76,1)" font-size="6.7" fill="#333" stroke="#333" stroke-width="0.2" text-anchor="end">1.032</text>
<text transform="translate(844.90,481.27) scale(0.76,1)" font-size="6.7" fill="#333" stroke="#333" stroke-width="0.2" text-anchor="end">0.222</text>
<text transform="translate(875.20,481.27) scale(0.76,1)" font-size="6.7" fill="#333" stroke="#333" stroke-width="0.2" text-anchor="end">0.249</text>
<text transform="translate(905.50,481.27) scale(0.76,1)" font-size="6.7" fill="#333" stroke="#333" stroke-width="0.2" text-anchor="end">1.12</text>
<text transform="translate(936.80,481.27) scale(0.76,1)" font-size="6.7" fill="#333" stroke="#333" stroke-width="0.2" text-anchor="end">0.00</text>
<circle cx="160.9" cy="489.27" r="1.75" fill="#3aa0e0"/>
<text transform="translate(165.4,491.52) scale(0.8,1)" font-size="6.7" fill="#111" stroke="#111" stroke-width="0.25" font-weight="bold">9</text>
<text transform="translate(204.80,491.52) scale(0.76,1)" font-size="6.7" fill="#333" stroke="#333" stroke-width="0.2" text-anchor="end">7.20</text>
<text transform="translate(235.80,491.52) scale(0.76,1)" font-size="6.7" fill="#333" stroke="#333" stroke-width="0.2" text-anchor="end">20.00</text>
<text transform="translate(265.80,491.52) scale(0.76,1)" font-size="6.7" fill="#333" stroke="#333" stroke-width="0.2" text-anchor="end">1.00</text>
<text transform="translate(296.30,491.52) scale(0.76,1)" font-size="6.7" fill="#333" stroke="#333" stroke-width="0.2" text-anchor="end">52.97</text>
<text transform="translate(326.80,491.52) scale(0.76,1)" font-size="6.7" fill="#333" stroke="#333" stroke-width="0.2" text-anchor="end">142.90</text>
<text transform="translate(357.10,491.52) scale(0.76,1)" font-size="6.7" fill="#333" stroke="#333" stroke-width="0.2" text-anchor="end">89.93</text>
<text transform="translate(387.40,491.52) scale(0.76,1)" font-size="6.7" fill="#333" stroke="#333" stroke-width="0.2" text-anchor="end">26</text>
<text transform="translate(408.30,491.52) scale(0.76,1)" font-size="6.7" fill="#333" stroke="#333" stroke-width="0.2" text-anchor="end">0.35</text>
<text transform="translate(427.80,491.52) scale(0.76,1)" font-size="6.7" fill="#333" stroke="#333" stroke-width="0.2" text-anchor="end">1.04</text>
<text transform="translate(446.90,491.52) scale(0.76,1)" font-size="6.7" fill="#333" stroke="#333" stroke-width="0.2" text-anchor="end">0.95</text>
<text transform="translate(465.20,491.52) scale(0.76,1)" font-size="6.7" fill="#333" stroke="#333" stroke-width="0.2" text-anchor="end">1.00</text>
<text transform="translate(486.40,491.52) scale(0.76,1)" font-size="6.7" fill="#333" stroke="#333" stroke-width="0.2" text-anchor="end">1.00</text>
<text transform="translate(510.60,491.52) scale(0.76,1)" font-size="6.7" fill="#333" stroke="#333" stroke-width="0.2" text-anchor="end">1.25</text>
<text transform="translate(541.40,491.52) scale(0.76,1)" font-size="6.7" fill="#333" stroke="#333" stroke-width="0.2" text-anchor="end">32.00</text>
<text transform="translate(571.60,491.52) scale(0.76,1)" font-size="6.7" fill="#333" stroke="#333" stroke-width="0.2" text-anchor="end">0.00</text>
<text transform="translate(602.20,491.52) scale(0.76,1)" font-size="6.7" fill="#333" stroke="#333" stroke-width="0.2" text-anchor="end">32</text>
<text transform="translate(632.90,491.52) scale(0.76,1)" font-size="6.7" fill="#333" stroke="#333" stroke-width="0.2" text-anchor="end">52.97</text>
<text transform="translate(663.20,491.52) scale(0.76,1)" font-size="6.7" fill="#333" stroke="#333" stroke-width="0.2" text-anchor="end">89.93</text>
<text transform="translate(693.30,491.52) scale(0.76,1)" font-size="6.7" fill="#333" stroke="#333" stroke-width="0.2" text-anchor="end">0.91</text>
<text transform="translate(723.60,491.52) scale(0.76,1)" font-size="6.7" fill="#333" stroke="#333" stroke-width="0.2" text-anchor="end">2.122</text>
<text transform="translate(753.80,491.52) scale(0.76,1)" font-size="6.7" fill="#333" stroke="#333" stroke-width="0.2" text-anchor="end">1.24</text>
<text transform="translate(784.10,491.52) scale(0.76,1)" font-size="6.7" fill="#333" stroke="#333" stroke-width="0.2" text-anchor="end">0.262</text>
<text transform="translate(814.65,491.52) scale(0.76,1)" font-size="6.7" fill="#333" stroke="#333" stroke-width="0.2" text-anchor="end">1.027</text>
<text transform="translate(844.90,491.52) scale(0.76,1)" font-size="6.7" fill="#333" stroke="#333" stroke-width="0.2" text-anchor="end">0.206</text>
<text transform="translate(875.20,491.52) scale(0.76,1)" font-size="6.7" fill="#333" stroke="#333" stroke-width="0.2" text-anchor="end">4.000</text>
<text transform="translate(905.50,491.52) scale(0.76,1)" font-size="6.7" fill="#333" stroke="#333" stroke-width="0.2" text-anchor="end">2.00</text>
<text transform="translate(936.80,491.52) scale(0.76,1)" font-size="6.7" fill="#333" stroke="#333" stroke-width="0.2" text-anchor="end">0.00</text>
</g>
<rect x="945.8" y="380.6" width="7" height="114" fill="#f0f0f0" />
<rect x="946.3" y="388.5" width="6" height="58" fill="#cdcdcd" />
<text x="949.3" y="386.2" font-size="5" fill="#555" stroke="#555" stroke-width="0.2" text-anchor="middle" font-weight="normal" >˄</text>
<text x="949.3" y="494.5" font-size="5" fill="#555" stroke="#555" stroke-width="0.2" text-anchor="middle" font-weight="normal" >˅</text>
<rect x="156.6" y="495" width="796" height="8.3" fill="#f0f0f0" />
<rect x="163" y="496.3" width="585" height="7.3" fill="#cdcdcd" />
<text x="941" y="502" font-size="7" fill="#555" stroke="#555" stroke-width="0.2" text-anchor="middle" font-weight="normal" >›</text>
<rect x="153.3" y="504" width="806" height="4" fill="#f2f0f0" />
<line x1="151" y1="508" x2="960" y2="508" stroke="#dddddd" stroke-width="0.8" />
<rect x="151" y="508.4" width="809" height="11" fill="#ffffff" />
<line x1="64" y1="519.6" x2="960" y2="519.6" stroke="#7f97b3" stroke-width="1" />
<defs><linearGradient id="lg" x1="0" x2="1" y1="0" y2="0"><stop offset="0" stop-color="#02040c"/><stop offset="0.5" stop-color="#060c20"/><stop offset="1" stop-color="#02040c"/></linearGradient></defs>
<rect x="64.9" y="482.4" width="173.1" height="35.7" fill="url(#lg)" />
<line x1="64.9" y1="482.6" x2="238" y2="482.6" stroke="#1e2840" stroke-width="0.6" />
<rect x="66.9" y="484.5" width="17.099999999999994" height="28.700000000000045" fill="#ffffff" />
<rect x="75.6" y="493.1" width="8.600000000000005" height="1.5" fill="#1c2448" />
<rect x="75.6" y="503.3" width="8.600000000000005" height="1.5" fill="#1c2448" />
<polygon points="113.3,483.2 122.7,483.2 96.2,517.8 86.5,517.8" fill="#ffffff"/>
<polygon points="85,483.2 98.5,483.2 124,517.8 111.5,517.8" fill="#ffffff"/>
<polygon points="92.6,486.6 97.6,486.6 118,515.2 114.6,515.2" fill="#000"/>
<polygon points="129.3,484.5 139.8,484.5 145.7,513.2 137.10000000000002,513.2 136.8,510.8 131.2,510.8 130.89999999999998,513.2 122.2,513.2" fill="#ffffff"/>
<polygon points="134.3,498.6 136.10000000000002,503.2 132.5,503.2" fill="#1c2448"/>
<path d="M149.5,484.5 L163.5,484.5 Q169.8,484.5 169.8,491.5 L169.8,506.2 Q169.8,513.2 163.5,513.2 L149.5,513.2 Z M158.8,492.3 L158.8,505 L161,505 L161,492.3 Z" fill="#ffffff" fill-rule="evenodd"/>
<rect x="170.9" y="484.5" width="17.5" height="28.700000000000045" fill="#ffffff" />
<rect x="180.2" y="493.1" width="8.400000000000016" height="1.5" fill="#1c2448" />
<rect x="180.2" y="503.3" width="8.400000000000016" height="1.5" fill="#1c2448" />
<polygon points="188.8,484.5 196.6,484.5 200.3,490.4 203.6,484.5 211.2,484.5 206.3,498.7 211.8,513.2 203.3,513.2 200.3,506.9 197.3,513.2 189.3,513.2 195.1,498.7" fill="#ffffff"/>
<polygon points="219.4,484.5 229.4,484.5 237.1,513.2 228.20000000000002,513.2 227.9,510.8 223.1,510.8 222.79999999999998,513.2 210.2,513.2" fill="#ffffff"/>
<polygon points="224.6,498.6 226.4,503.2 222.79999999999998,503.2" fill="#1c2448"/>
<path d="M205.6,509.8 C207,507.2 209.5,507 210,508.6 C208,508 207,510.5 209.5,510.2 L213,509.6 C214,507.6 216.5,508 215.8,509.6 C215,510.8 213,510 213.6,508.8 M217,509.4 L219.5,509.2 C220.5,507.4 222.8,507.6 222.2,509.4 C221.6,510.6 219.8,510 220.3,508.6 M223.5,509.2 C224.5,507.8 225.5,507.6 225.8,509.6 C226.5,507.6 228,507.6 228.3,509.6 C229,507.6 230.5,507.6 231,509.6 L233.5,509 C235.5,508.6 237.5,508.2 240,508" fill="none" stroke="#1a1a1a" stroke-width="0.85"/>
</g>
</svg></body></html>
